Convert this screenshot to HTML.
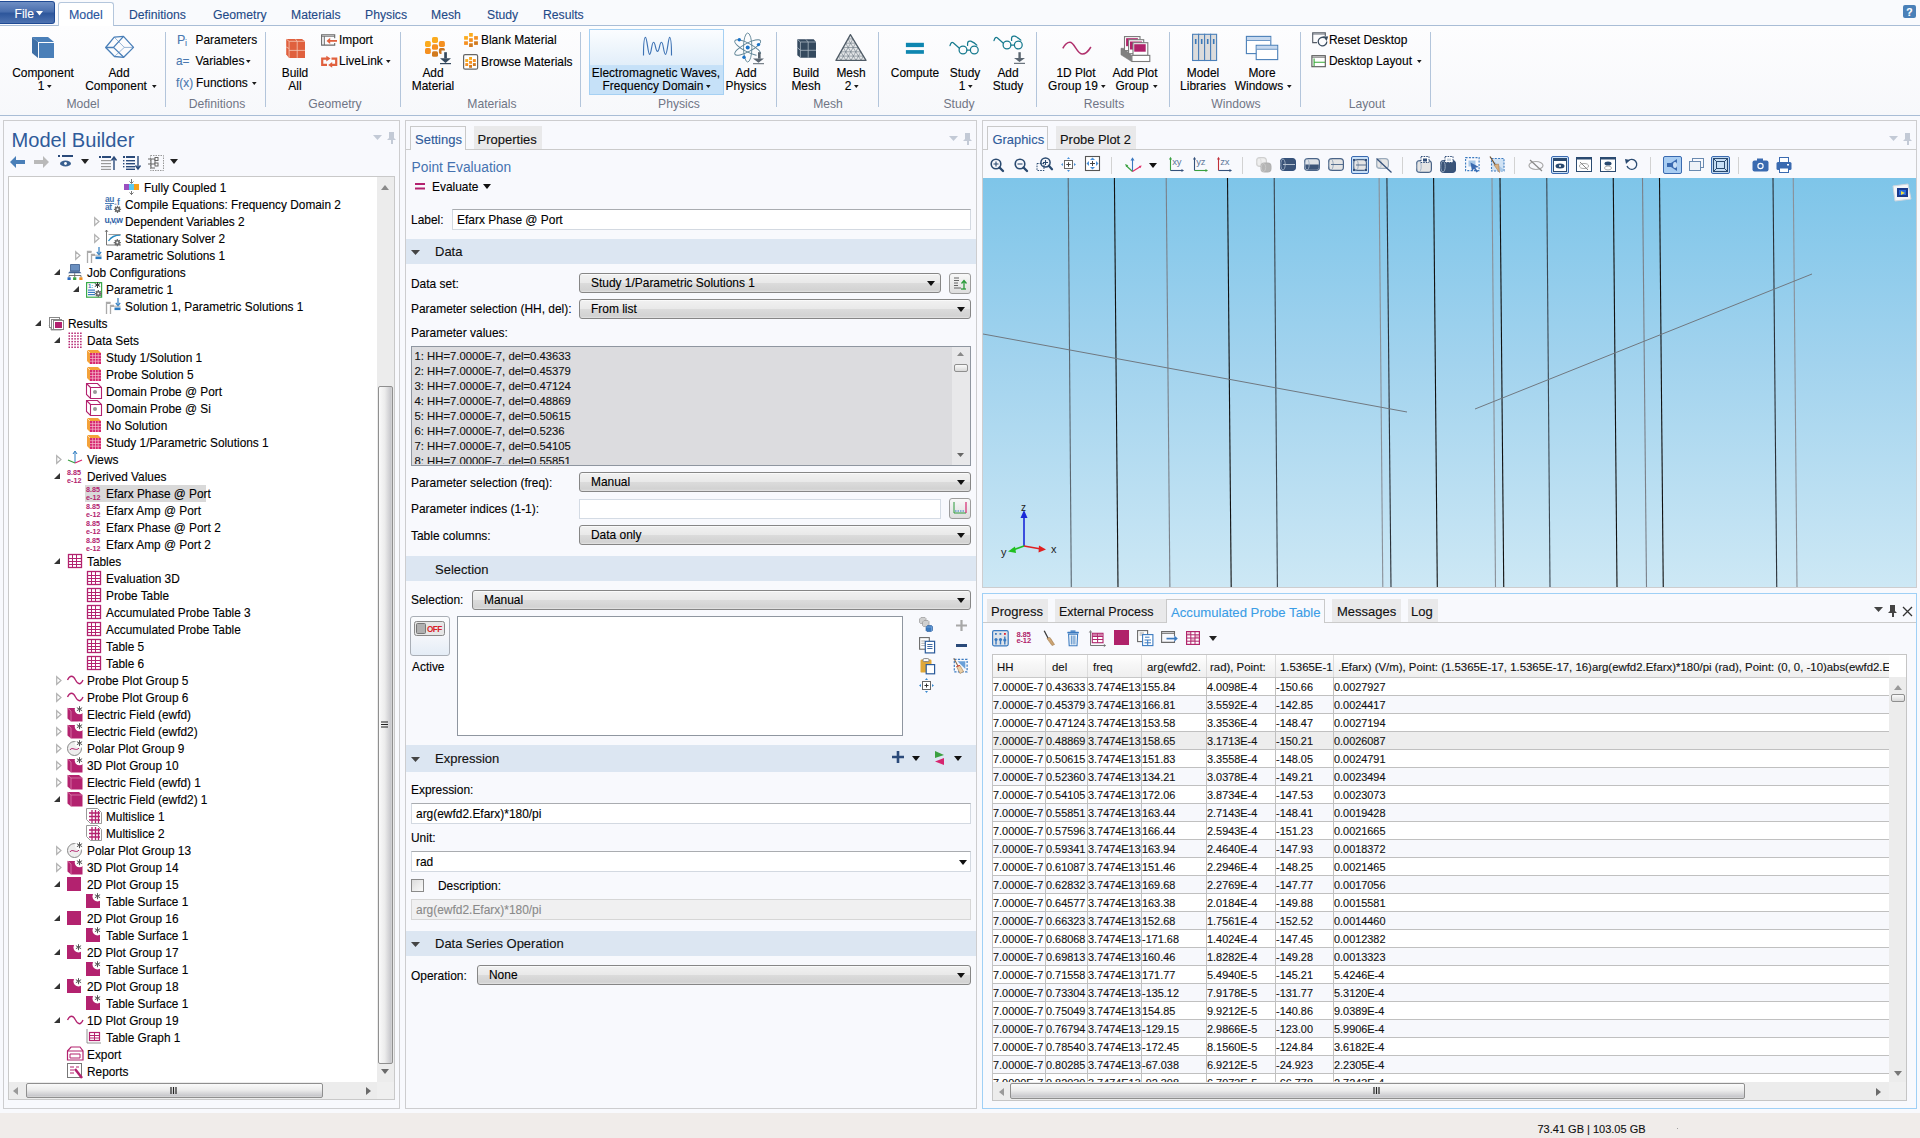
<!DOCTYPE html>
<html><head><meta charset="utf-8"><style>
html,body{margin:0;padding:0;}
body{width:1920px;height:1138px;position:relative;overflow:hidden;background:#f8f9fd;font-family:"Liberation Sans", sans-serif;}
.t{position:absolute;white-space:nowrap;line-height:1;font-family:"Liberation Sans", sans-serif;-webkit-text-stroke:0.12px currentColor;}
.lt{-webkit-text-stroke:0 !important;}
svg{overflow:visible}
</style></head><body>

<div style="position:absolute;left:0px;top:0px;width:1920px;height:26px;background:#f9fafd;"></div>
<div style="position:absolute;left:0px;top:25px;width:1920px;height:1px;background:#a9bdd6;"></div>
<div style="position:absolute;left:0px;top:26px;width:1920px;height:89px;background:linear-gradient(#fdfdfe,#f7f8fb);"></div>
<div style="position:absolute;left:0px;top:115px;width:1920px;height:1px;background:#a9bdd6;"></div>
<div style="position:absolute;left:0px;top:1px;width:55px;height:23px;background:linear-gradient(#6f8fc4 0%,#4a6fae 45%,#2e579c 55%,#4d72b0 100%);border:1px solid #1f4a94;border-left:none;border-radius:0 3px 3px 0;box-sizing:border-box;"></div>
<div class="t" style="left:14.5px;top:8.00px;font-size:12.15px;color:#fff;">File</div>
<svg style="position:absolute;left:36px;top:10.5px;" width="7" height="5" viewBox="0 0 7 5"><path d="M0 0H7L3.5 4.5Z" fill="#fff"/></svg>
<div style="position:absolute;left:58px;top:2px;width:56px;height:24px;background:#fff;border:1px solid #b4c6dc;border-bottom:none;border-radius:3px 3px 0 0;box-sizing:border-box;"></div>
<div class="t" style="left:69px;top:9.00px;font-size:12.4px;color:#2a56a0;">Model</div>
<div class="t" style="left:129px;top:9.00px;font-size:12.21px;color:#1f4a88;">Definitions</div>
<div class="t" style="left:213px;top:9.00px;font-size:12.21px;color:#1f4a88;">Geometry</div>
<div class="t" style="left:291px;top:9.00px;font-size:12.21px;color:#1f4a88;">Materials</div>
<div class="t" style="left:365px;top:9.00px;font-size:12.21px;color:#1f4a88;">Physics</div>
<div class="t" style="left:431px;top:9.00px;font-size:12.21px;color:#1f4a88;">Mesh</div>
<div class="t" style="left:487px;top:9.00px;font-size:12.21px;color:#1f4a88;">Study</div>
<div class="t" style="left:543px;top:9.00px;font-size:12.21px;color:#1f4a88;">Results</div>
<div style="position:absolute;left:1903px;top:5px;width:13px;height:13px;background:#4a80b8;border-radius:2px;"></div>
<div class="t" style="left:1906.3px;top:8.00px;font-size:10.4px;color:#fff;font-weight:bold;">?</div>
<div style="position:absolute;left:165px;top:32px;width:1px;height:75px;background:#b3c5db;"></div>
<div style="position:absolute;left:265px;top:32px;width:1px;height:75px;background:#b3c5db;"></div>
<div style="position:absolute;left:400px;top:32px;width:1px;height:75px;background:#b3c5db;"></div>
<div style="position:absolute;left:580px;top:32px;width:1px;height:75px;background:#b3c5db;"></div>
<div style="position:absolute;left:776px;top:32px;width:1px;height:75px;background:#b3c5db;"></div>
<div style="position:absolute;left:878px;top:32px;width:1px;height:75px;background:#b3c5db;"></div>
<div style="position:absolute;left:1036px;top:32px;width:1px;height:75px;background:#b3c5db;"></div>
<div style="position:absolute;left:1169px;top:32px;width:1px;height:75px;background:#b3c5db;"></div>
<div style="position:absolute;left:1300px;top:32px;width:1px;height:75px;background:#b3c5db;"></div>
<div style="position:absolute;left:1430px;top:32px;width:1px;height:75px;background:#b3c5db;"></div>
<div class="t" style="left:-67px;width:300px;text-align:center;top:98.00px;font-size:12.15px;color:#707585;-webkit-text-stroke:0;">Model</div>
<div class="t" style="left:67px;width:300px;text-align:center;top:98.00px;font-size:12.15px;color:#707585;-webkit-text-stroke:0;">Definitions</div>
<div class="t" style="left:185px;width:300px;text-align:center;top:98.00px;font-size:12.15px;color:#707585;-webkit-text-stroke:0;">Geometry</div>
<div class="t" style="left:342px;width:300px;text-align:center;top:98.00px;font-size:12.15px;color:#707585;-webkit-text-stroke:0;">Materials</div>
<div class="t" style="left:529px;width:300px;text-align:center;top:98.00px;font-size:12.15px;color:#707585;-webkit-text-stroke:0;">Physics</div>
<div class="t" style="left:678px;width:300px;text-align:center;top:98.00px;font-size:12.15px;color:#707585;-webkit-text-stroke:0;">Mesh</div>
<div class="t" style="left:809px;width:300px;text-align:center;top:98.00px;font-size:12.15px;color:#707585;-webkit-text-stroke:0;">Study</div>
<div class="t" style="left:954px;width:300px;text-align:center;top:98.00px;font-size:12.15px;color:#707585;-webkit-text-stroke:0;">Results</div>
<div class="t" style="left:1086px;width:300px;text-align:center;top:98.00px;font-size:12.15px;color:#707585;-webkit-text-stroke:0;">Windows</div>
<div class="t" style="left:1217px;width:300px;text-align:center;top:98.00px;font-size:12.15px;color:#707585;-webkit-text-stroke:0;">Layout</div>
<svg style="position:absolute;left:30px;top:36px;" width="26" height="24" viewBox="0 0 26 24"><path d="M2 1H18L24 6H8Z" fill="#4a7fb8"/><path d="M2 1L8 6V22L2 17Z" fill="#3f6fa6"/><rect x="9" y="7" width="15" height="15" fill="#4a7fb8"/></svg>
<div class="t" style="left:-107px;width:300px;text-align:center;top:68.00px;font-size:11.95px;color:#000;">Component</div>
<div class="t" style="left:-109px;width:300px;text-align:center;top:81.00px;font-size:11.95px;color:#000;">1</div>
<svg style="position:absolute;left:46.8px;top:85px;" width="5" height="4" viewBox="0 0 5 4"><path d="M0 0H4.6L2.3 3Z" fill="#1a1a1a"/></svg>
<svg style="position:absolute;left:100px;top:32px;" width="40" height="30" viewBox="0 0 40 30"><g fill="none" stroke="#4a7fb8" stroke-linejoin="round"><path d="M5.7 15.5L14.2 5.1L23.5 4.4L33.5 15.4L23.7 25.3L14.5 24.5Z" stroke-width="1.3"/><path d="M5.7 15.5H13.5M23.5 4.4L13.5 15.4L23.7 25.3" stroke-width="1.3"/><path d="M14.2 5.1L24.3 15.4L14.5 24.5M24.3 15.4H33.5" stroke-width="0.8" stroke-opacity="0.7"/></g></svg>
<div class="t" style="left:-31px;width:300px;text-align:center;top:68.00px;font-size:11.95px;color:#000;">Add</div>
<div class="t" style="left:-34px;width:300px;text-align:center;top:81.00px;font-size:11.95px;color:#000;">Component</div>
<svg style="position:absolute;left:151.6px;top:85px;" width="5" height="4" viewBox="0 0 5 4"><path d="M0 0H4.6L2.3 3Z" fill="#1a1a1a"/></svg>
<div class="t" style="left:177px;top:34.00px;font-size:12.5px;color:#4a78b0;">P</div>
<div class="t" style="left:185px;top:39.00px;font-size:9px;color:#4a78b0;">i</div>
<div class="t" style="left:195.5px;top:35.00px;font-size:11.95px;color:#000;">Parameters</div>
<div class="t" style="left:176px;top:56.00px;font-size:11.85px;color:#4a78b0;">a=</div>
<div class="t" style="left:195.5px;top:56.00px;font-size:11.95px;color:#000;">Variables</div>
<svg style="position:absolute;left:246.2px;top:60px;" width="5" height="4" viewBox="0 0 5 4"><path d="M0 0H4.6L2.3 3Z" fill="#1a1a1a"/></svg>
<div class="t" style="left:176px;top:78.00px;font-size:11.85px;color:#4a78b0;">f(x)</div>
<div class="t" style="left:196px;top:78.00px;font-size:11.95px;color:#000;">Functions</div>
<svg style="position:absolute;left:251.9px;top:82px;" width="5" height="4" viewBox="0 0 5 4"><path d="M0 0H4.6L2.3 3Z" fill="#1a1a1a"/></svg>
<svg style="position:absolute;left:280px;top:30px;" width="30" height="32" viewBox="0 0 30 32"><path d="M6.2 9.1H22L25 11.3V27.9H9.1L6.2 24.6Z" fill="#e0603e"/><path d="M9.1 11.3H25M9.1 20.4H25M17.2 11.3V27.9M9.1 11.3V27.9M6.2 9.1L9.1 11.3M6.2 17L9.1 18.5M15.5 9.1L17.2 11.3" stroke="#f5c8b8" stroke-width="0.8" fill="none"/></svg>
<div class="t" style="left:145px;width:300px;text-align:center;top:68.00px;font-size:11.95px;color:#000;">Build</div>
<div class="t" style="left:145px;width:300px;text-align:center;top:81.00px;font-size:11.95px;color:#000;">All</div>
<svg style="position:absolute;left:320px;top:30px;" width="20" height="20" viewBox="0 0 20 20"><path d="M14.7 8.3V4.7H1.6V15.1H14.7V13" fill="none" stroke="#6a6a6a" stroke-width="1.1"/><path d="M1.6 6.2H14.7M4.3 6.2V15.1" stroke="#6a6a6a" stroke-width="1"/><path d="M17 10.9H9" stroke="#e0603e" stroke-width="1.8"/><path d="M6.5 10.9L10.2 7.8V14Z" fill="#e0603e"/></svg>
<div class="t" style="left:339px;top:35.00px;font-size:11.95px;color:#000;">Import</div>
<svg style="position:absolute;left:320px;top:50px;" width="20" height="20" viewBox="0 0 20 20"><path d="M7 8.6H2.2V14.9H7M11.5 8.6H16.2V14.9H11" fill="none" stroke="#e0603e" stroke-width="2.2"/><path d="M6.3 5.8L10.6 8.6L6.3 11.4Z" fill="#e0603e"/><path d="M12.2 12.1L8.2 14.9L12.2 17.7Z" fill="#e0603e"/></svg>
<div class="t" style="left:339px;top:56.00px;font-size:11.95px;color:#000;">LiveLink</div>
<svg style="position:absolute;left:386.2px;top:60px;" width="5" height="4" viewBox="0 0 5 4"><path d="M0 0H4.6L2.3 3Z" fill="#1a1a1a"/></svg>
<svg style="position:absolute;left:420px;top:28px;" width="36" height="40" viewBox="0 0 36 40"><g><rect x="12" y="8.9" width="6" height="6" rx="1.6" fill="#fbab1e"/><rect x="5" y="13.1" width="5.8" height="5.8" rx="1.6" fill="#fbab1e"/><rect x="18.9" y="13.1" width="6" height="5.8" rx="1.6" fill="#f59020"/><rect x="12" y="16.2" width="6" height="5.6" rx="1.6" fill="#f59020"/><rect x="5" y="20.1" width="5.8" height="5.8" rx="1.6" fill="#f59020"/><rect x="12" y="23.2" width="6" height="5.6" rx="1.6" fill="#d27a1e"/><path d="M20.5 20.1H23.3Q24.9 20.1 24.9 21.7V22.5H21.5V25.9H20.5Q18.9 25.9 18.9 24.3V21.7Q18.9 20.1 20.5 20.1Z" fill="#c87420"/></g><rect x="24.2" y="24.2" width="2.7" height="6.2" fill="#34495e"/><path d="M20 30.2H31L25.5 35Z" fill="#34495e"/><rect x="20" y="35" width="11" height="1.2" fill="#34495e"/></svg>
<div class="t" style="left:283px;width:300px;text-align:center;top:68.00px;font-size:11.95px;color:#000;">Add</div>
<div class="t" style="left:283px;width:300px;text-align:center;top:81.00px;font-size:11.95px;color:#000;">Material</div>
<svg style="position:absolute;left:464px;top:33px;" width="16" height="16" viewBox="0 0 16 16"><g><rect x="5.1" y="0" width="3.7" height="3.7" fill="#fbab1e"/><rect x="0.1" y="3.1" width="3.8" height="3.6" fill="#fbab1e"/><rect x="10.1" y="3.1" width="3.8" height="3.6" fill="#f59020"/><rect x="5.1" y="5.2" width="3.7" height="3.7" fill="#f59020"/><rect x="0.1" y="8.3" width="3.8" height="3.6" fill="#f59020"/><rect x="10.1" y="8.3" width="3.8" height="3.6" fill="#d27a1e"/><rect x="5.1" y="10.3" width="3.7" height="3.7" fill="#d27a1e"/></g></svg>
<div class="t" style="left:481px;top:35.00px;font-size:11.95px;color:#000;">Blank Material</div>
<svg style="position:absolute;left:463px;top:54px;" width="16" height="17" viewBox="0 0 16 17"><rect x="0.6" y="0.6" width="14" height="14.6" rx="1.5" fill="#fff" stroke="#666" stroke-width="1.2"/><g><rect x="6.1" y="3" width="2.9" height="2.9" fill="#fbab1e"/><rect x="2.3" y="5.1" width="2.9" height="2.9" fill="#fbab1e"/><rect x="9.9" y="5.1" width="2.9" height="2.9" fill="#f59020"/><rect x="6.1" y="6.9" width="2.9" height="2.9" fill="#f59020"/><rect x="2.3" y="9.1" width="2.9" height="2.9" fill="#f59020"/><rect x="9.9" y="9.1" width="2.9" height="2.9" fill="#d27a1e"/><rect x="6.1" y="10.9" width="2.9" height="2.9" fill="#d27a1e"/></g></svg>
<div class="t" style="left:481px;top:57.00px;font-size:11.95px;color:#000;">Browse Materials</div>
<div style="position:absolute;left:589px;top:29px;width:135px;height:66px;border:1px solid #a5d0f3;box-sizing:border-box;background:linear-gradient(#fbfdff 0%,#e2eef9 55%,#c6e1f8 55.5%,#c6e1f8 100%);"></div>
<svg style="position:absolute;left:636px;top:32px;" width="44" height="30" viewBox="0 0 44 30"><path d="M7.5 23.5C7.5 8 8.5 5.3 9.5 5.3C11 5.3 12 22.4 13.6 22.4C15.5 22.4 15.5 10.3 17.5 10.3C19.5 10.3 19.5 19.3 21.5 19.3C23.5 19.3 23.5 10.3 25.5 10.3C27.5 10.3 27.5 22.4 29.6 22.4C31.2 22.4 32.5 5.3 33.5 5.3C34.5 5.3 35.5 8 35.5 23.5" fill="none" stroke="#3d72b4" stroke-width="1.15"/></svg>
<div class="t" style="left:506px;width:300px;text-align:center;top:68.00px;font-size:11.95px;color:#000;">Electromagnetic Waves,</div>
<div class="t" style="left:503px;width:300px;text-align:center;top:81.00px;font-size:11.95px;color:#000;">Frequency Domain</div>
<svg style="position:absolute;left:706.4px;top:85px;" width="5" height="4" viewBox="0 0 5 4"><path d="M0 0H4.6L2.3 3Z" fill="#1a1a1a"/></svg>
<svg style="position:absolute;left:730px;top:30px;" width="36" height="36" viewBox="0 0 36 36"><g fill="none" stroke="#5f8496" stroke-width="0.9"><ellipse cx="17.7" cy="17.5" rx="4.2" ry="14.5"/><ellipse cx="17.7" cy="17.5" rx="4.2" ry="14.5" transform="rotate(62 17.7 17.5)"/><ellipse cx="17.7" cy="17.5" rx="4.2" ry="14.5" transform="rotate(-62 17.7 17.5)"/></g><g fill="#1a73c8"><circle cx="17.7" cy="17.5" r="2"/><circle cx="9.3" cy="9.8" r="1.7"/><circle cx="28.5" cy="14.6" r="1.7"/><circle cx="14" cy="27.2" r="1.7"/></g><rect x="26.5" y="24" width="6" height="9" fill="#fbfcfe"/><rect x="28" y="22.2" width="2.6" height="6.4" fill="#5a6570"/><path d="M23 28.4H34L28.5 32.8Z" fill="#5a6570"/><rect x="23" y="33.2" width="11" height="1" fill="#5a6570"/></svg>
<div class="t" style="left:596px;width:300px;text-align:center;top:68.00px;font-size:11.95px;color:#000;">Add</div>
<div class="t" style="left:596px;width:300px;text-align:center;top:81.00px;font-size:11.95px;color:#000;">Physics</div>
<svg style="position:absolute;left:795px;top:37px;" width="24" height="24" viewBox="0 0 24 24"><path d="M2.3 2.3H18.7L21 5V20.7H5.4L2.3 18.3Z" fill="#34495e"/><path d="M5.4 5H21M5.4 13.3H21M13.2 5V20.7M5.4 5V20.7M2.3 2.3L5.4 5M10.8 2.3L13.2 5M2.3 10.5L5.4 13.3" stroke="#a9b6c2" stroke-width="0.8" fill="none"/></svg>
<div class="t" style="left:656px;width:300px;text-align:center;top:68.00px;font-size:11.95px;color:#000;">Build</div>
<div class="t" style="left:656px;width:300px;text-align:center;top:81.00px;font-size:11.95px;color:#000;">Mesh</div>
<svg style="position:absolute;left:835px;top:33px;" width="32" height="30" viewBox="0 0 32 30"><path d="M15.4 1.6L31.0 27.4H1.0Z" fill="#e4e6e8"/><path d="M13.00 5.90H18.00M18.00 5.90L6.00 27.40M13.00 5.90L26.00 27.40M10.60 10.20H20.60M20.60 10.20L11.00 27.40M10.60 10.20L21.00 27.40M8.20 14.50H23.20M23.20 14.50L16.00 27.40M8.20 14.50L16.00 27.40M5.80 18.80H25.80M25.80 18.80L21.00 27.40M5.80 18.80L11.00 27.40M3.40 23.10H28.40M28.40 23.10L26.00 27.40M3.40 23.10L6.00 27.40" stroke="#6f7a84" stroke-width="0.6" fill="none"/><path d="M15.4 1.6L31.0 27.4H1.0Z" fill="none" stroke="#4f5b66" stroke-width="1.3" stroke-linejoin="round"/></svg>
<div class="t" style="left:701px;width:300px;text-align:center;top:68.00px;font-size:11.95px;color:#000;">Mesh</div>
<div class="t" style="left:698px;width:300px;text-align:center;top:81.00px;font-size:11.95px;color:#000;">2</div>
<svg style="position:absolute;left:853.6px;top:85.2px;" width="5" height="4" viewBox="0 0 5 4"><path d="M0 0H4.6L2.3 3Z" fill="#1a1a1a"/></svg>
<svg style="position:absolute;left:905px;top:42px;" width="20" height="13" viewBox="0 0 20 13"><rect x="0.9" y="0.8" width="18" height="4.3" fill="#0e86b0"/><rect x="0.9" y="8.1" width="18" height="3.7" fill="#0e86b0"/></svg>
<div class="t" style="left:765px;width:300px;text-align:center;top:68.00px;font-size:11.95px;color:#000;">Compute</div>
<svg style="position:absolute;left:947.4px;top:35.9px;" width="34" height="22" viewBox="0 0 34 22"><g fill="none" stroke="#167a8e" stroke-width="1.25" stroke-linecap="round"><circle cx="16" cy="14" r="3.9"/><circle cx="27.3" cy="14" r="3.9"/><path d="M19.9 14H23.4M12.4 12.2L6.2 6.8Q4.2 5.2 3 9.6M20.6 9.4Q20 4.2 23.8 5.2Q27.5 6.6 29.8 9.2"/></g></svg>
<div class="t" style="left:815px;width:300px;text-align:center;top:68.00px;font-size:11.95px;color:#000;">Study</div>
<div class="t" style="left:812px;width:300px;text-align:center;top:81.00px;font-size:11.95px;color:#000;">1</div>
<svg style="position:absolute;left:968.2px;top:85.2px;" width="5" height="4" viewBox="0 0 5 4"><path d="M0 0H4.6L2.3 3Z" fill="#1a1a1a"/></svg>
<svg style="position:absolute;left:991.1px;top:30.799999999999997px;" width="34" height="22" viewBox="0 0 34 22"><g fill="none" stroke="#167a8e" stroke-width="1.25" stroke-linecap="round"><circle cx="16" cy="14" r="3.9"/><circle cx="27.3" cy="14" r="3.9"/><path d="M19.9 14H23.4M12.4 12.2L6.2 6.8Q4.2 5.2 3 9.6M20.6 9.4Q20 4.2 23.8 5.2Q27.5 6.6 29.8 9.2"/></g></svg>
<svg style="position:absolute;left:1012px;top:50px;" width="20" height="20" viewBox="0 0 20 20"><rect x="6.4" y="2.2" width="2.4" height="6" fill="#5a6570"/><path d="M2 8H13L7.6 12Z" fill="#5a6570"/><rect x="2" y="12.8" width="11" height="1.1" fill="#5a6570"/></svg>
<div class="t" style="left:858px;width:300px;text-align:center;top:68.00px;font-size:11.95px;color:#000;">Add</div>
<div class="t" style="left:858px;width:300px;text-align:center;top:81.00px;font-size:11.95px;color:#000;">Study</div>
<svg style="position:absolute;left:1055px;top:28px;" width="40" height="36" viewBox="0 0 40 36"><path d="M7.8 20.3C10 16 12.5 14.2 14.9 14.2C19.5 14.2 22 26.1 27.4 26.1C30.5 26.1 33.5 23 35.9 19" fill="none" stroke="#b0306c" stroke-width="1.5"/></svg>
<div class="t" style="left:926px;width:300px;text-align:center;top:68.00px;font-size:11.95px;color:#000;">1D Plot</div>
<div class="t" style="left:923px;width:300px;text-align:center;top:81.00px;font-size:11.95px;color:#000;">Group 19</div>
<svg style="position:absolute;left:1100.6px;top:85.2px;" width="5" height="4" viewBox="0 0 5 4"><path d="M0 0H4.6L2.3 3Z" fill="#1a1a1a"/></svg>
<svg style="position:absolute;left:1105px;top:28px;" width="50" height="40" viewBox="0 0 50 40"><path d="M16 20.3H18.5L26.5 27.4V33.5L16 26.8Z" fill="#808080" stroke="#777" stroke-width="0.6"/><rect x="19.5" y="8.6" width="15.5" height="14" fill="#fff" stroke="#7a7a7a" stroke-width="1.1"/><rect x="21.1" y="10.2" width="11.8" height="8" fill="#b0226a"/><rect x="23.6" y="11.7" width="15.1" height="14" fill="#fff" stroke="#7a7a7a" stroke-width="1.1"/><rect x="25" y="13.5" width="12" height="8" fill="#b0226a"/><rect x="28" y="14.7" width="14.8" height="12.7" fill="#fff" stroke="#7a7a7a" stroke-width="1.1"/><rect x="29.2" y="16.2" width="11.5" height="7.5" fill="#b0226a"/><rect x="26.9" y="27.4" width="17.9" height="6.1" fill="#fff" stroke="#7a7a7a" stroke-width="1.1"/></svg>
<div class="t" style="left:985px;width:300px;text-align:center;top:68.00px;font-size:11.95px;color:#000;">Add Plot</div>
<div class="t" style="left:982px;width:300px;text-align:center;top:81.00px;font-size:11.95px;color:#000;">Group</div>
<svg style="position:absolute;left:1152.8px;top:85.2px;" width="5" height="4" viewBox="0 0 5 4"><path d="M0 0H4.6L2.3 3Z" fill="#1a1a1a"/></svg>
<svg style="position:absolute;left:1190px;top:32px;" width="28" height="30" viewBox="0 0 28 30"><g fill="#dcdcdc" stroke="#4a7fb8" stroke-width="1.1"><rect x="2.6" y="2.3" width="6" height="26.2"/><rect x="8.6" y="2.3" width="6" height="26.2"/><rect x="14.6" y="2.3" width="6" height="26.2"/><rect x="20.6" y="2.3" width="6" height="26.2"/></g><g fill="#3a78b8"><rect x="4.9" y="7" width="1.6" height="5"/><rect x="10.9" y="7" width="1.6" height="5"/><rect x="16.9" y="7" width="1.6" height="5"/><rect x="22.9" y="7" width="1.6" height="5"/></g></svg>
<div class="t" style="left:1053px;width:300px;text-align:center;top:68.00px;font-size:11.95px;color:#000;">Model</div>
<div class="t" style="left:1053px;width:300px;text-align:center;top:81.00px;font-size:11.95px;color:#000;">Libraries</div>
<svg style="position:absolute;left:1245px;top:35px;" width="34" height="26" viewBox="0 0 34 26"><g fill="#fff" stroke="#4a7fb8" stroke-width="1.1"><rect x="1.4" y="1.4" width="24.4" height="17.2"/><rect x="11.2" y="10.3" width="21.5" height="14.3"/></g><rect x="2" y="2" width="23.2" height="3.2" fill="#c6d8ee"/><rect x="11.8" y="10.9" width="20.3" height="3.2" fill="#c6d8ee"/><path d="M2 5.5H25.2M11.8 14.3H32.1" stroke="#4a7fb8" stroke-width="0.8"/></svg>
<div class="t" style="left:1112px;width:300px;text-align:center;top:68.00px;font-size:11.95px;color:#000;">More</div>
<div class="t" style="left:1109px;width:300px;text-align:center;top:81.00px;font-size:11.95px;color:#000;">Windows</div>
<svg style="position:absolute;left:1286.5px;top:85.2px;" width="5" height="4" viewBox="0 0 5 4"><path d="M0 0H4.6L2.3 3Z" fill="#1a1a1a"/></svg>
<svg style="position:absolute;left:1310px;top:32px;" width="20" height="16" viewBox="0 0 20 16"><path d="M7 10.6H2.7V0.7H15.3V4" fill="none" stroke="#555c66" stroke-width="1.1"/><path d="M2.7 2H15.3" stroke="#555c66" stroke-width="0.9"/><path d="M16.8 9.5A4.3 4.3 0 1 1 14.6 5.8" fill="none" stroke="#3b4d60" stroke-width="1.3"/><path d="M13 4.2L18.2 4.4L16.6 9Z" fill="#3b4d60"/></svg>
<div class="t" style="left:1329px;top:35.00px;font-size:11.95px;color:#000;">Reset Desktop</div>
<svg style="position:absolute;left:1311px;top:55px;" width="16" height="13" viewBox="0 0 16 13"><rect x="0.9" y="0.7" width="13.4" height="11" fill="#fff" stroke="#555" stroke-width="1.1"/><path d="M0.9 2.2H14.3" stroke="#666" stroke-width="0.9"/><path d="M3.1 3.5V11.2M3.1 7.2H14" stroke="#3aaa3a" stroke-width="1.1"/></svg>
<div class="t" style="left:1329px;top:56.00px;font-size:11.95px;color:#000;">Desktop Layout</div>
<svg style="position:absolute;left:1416.8px;top:60px;" width="5" height="4" viewBox="0 0 5 4"><path d="M0 0H4.6L2.3 3Z" fill="#1a1a1a"/></svg>
<div style="position:absolute;left:0px;top:1113px;width:1920px;height:25px;background:#f0ecea;"></div>
<div class="t" style="left:1537.5px;top:1124.00px;font-size:11.0px;color:#111;">73.41 GB | 103.05 GB</div>
<div style="position:absolute;left:1677px;top:1128px;width:1px;height:1px;background:#a0a0a0;"></div>
<div style="position:absolute;left:3px;top:120px;width:397px;height:989px;border:1px solid #cdcdcf;box-sizing:border-box;background:#f8f9fd;"></div>
<div class="t" style="left:11.5px;top:130.00px;font-size:20.1px;color:#2f5b9a;-webkit-text-stroke:0;">Model Builder</div>
<svg style="position:absolute;left:373px;top:135px;" width="10" height="6" viewBox="0 0 10 6"><path d="M0 0H9L4.5 5Z" fill="#c3cad6"/></svg>
<svg style="position:absolute;left:387px;top:132px;" width="10" height="13" viewBox="0 0 10 13"><path d="M2 0H7V6L9 8H6V12H4V8H0L2 6Z" fill="#c3cad6"/></svg>
<svg style="position:absolute;left:10px;top:156px;" width="16" height="12" viewBox="0 0 16 12"><path d="M0 6L6 0V4H15V8H6V12Z" fill="#4a7fb8"/></svg>
<svg style="position:absolute;left:34px;top:156px;" width="16" height="12" viewBox="0 0 16 12"><path d="M15 6L9 0V4H0V8H9V12Z" fill="#b9b9b9"/></svg>
<svg style="position:absolute;left:58px;top:155px;" width="16" height="14" viewBox="0 0 16 14"><rect x="0" y="0" width="2" height="2" fill="#2a4a7a"/><rect x="4" y="0" width="11" height="2" fill="#2a4a7a"/><ellipse cx="7.5" cy="8.5" rx="5.5" ry="3" fill="#3a6090"/><circle cx="7.5" cy="8.5" r="1.4" fill="#fff"/></svg>
<svg style="position:absolute;left:81px;top:159px;" width="8" height="6" viewBox="0 0 8 6"><path d="M0 0H8L4 5Z" fill="#222"/></svg>
<svg style="position:absolute;left:99px;top:156px;" width="18" height="14" viewBox="0 0 18 14"><g fill="#999"><rect x="2" y="4" width="10" height="1.2"/><rect x="2" y="7" width="10" height="1.2"/><rect x="2" y="10" width="10" height="1.2"/><rect x="2" y="12.8" width="10" height="1.2"/></g><rect x="0" y="0" width="2" height="2" fill="#2a4a7a"/><rect x="3" y="0" width="9" height="2" fill="#2a4a7a"/><path d="M15 14V2M12.5 4.5L15 1L17.5 4.5" stroke="#2a4a7a" stroke-width="1.4" fill="none"/></svg>
<svg style="position:absolute;left:123px;top:156px;" width="18" height="14" viewBox="0 0 18 14"><g fill="#2a4a7a"><rect x="0" y="0" width="2" height="2"/><rect x="3" y="0" width="9" height="2"/><rect x="3" y="4" width="9" height="1.4"/><rect x="3" y="7" width="9" height="1.4"/><rect x="3" y="10" width="9" height="1.4"/><rect x="3" y="12.6" width="9" height="1.4"/><rect x="0" y="4" width="1.4" height="1.4"/><rect x="0" y="7" width="1.4" height="1.4"/><rect x="0" y="10" width="1.4" height="1.4"/></g><path d="M15 0V12M12.5 9.5L15 13L17.5 9.5" stroke="#2a4a7a" stroke-width="1.4" fill="none"/></svg>
<svg style="position:absolute;left:147px;top:155px;" width="18" height="16" viewBox="0 0 18 16"><rect x="3.5" y="0.5" width="13" height="15" fill="none" stroke="#999" stroke-dasharray="1.5 1"/><path d="M1 4H8V9H1M4 4V13H8" fill="none" stroke="#666"/><rect x="8" y="2.5" width="3" height="3" fill="#fff" stroke="#666"/><rect x="8" y="8" width="3" height="3" fill="#fff" stroke="#666"/></svg>
<svg style="position:absolute;left:170px;top:159px;" width="8" height="6" viewBox="0 0 8 6"><path d="M0 0H8L4 5Z" fill="#222"/></svg>
<div style="position:absolute;left:8px;top:176px;width:387px;height:924px;background:#fff;border:1px solid #c9c9c9;box-sizing:border-box;"></div>
<div style="position:absolute;left:377px;top:177px;width:17px;height:906px;background:#ececec;"></div>
<svg style="position:absolute;left:381px;top:185px;" width="8" height="5" viewBox="0 0 8 5"><path d="M0 5L4 0L8 5Z" fill="#8a8a8a"/></svg>
<svg style="position:absolute;left:381px;top:1069px;" width="8" height="5" viewBox="0 0 8 5"><path d="M0 0H8L4 5Z" fill="#6a6a6a"/></svg>
<div style="position:absolute;left:378px;top:386px;width:15px;height:678px;background:linear-gradient(90deg,#fafafa 0%,#ececec 45%,#c8c8cc 90%,#d8d8d8 100%);border:1px solid #8f8f8f;border-radius:2px;box-sizing:border-box;"></div>
<svg style="position:absolute;left:381px;top:721px;" width="8" height="7" viewBox="0 0 8 7"><g stroke="#222" stroke-width="1.2"><path d="M0 1H7M0 3.5H7M0 6H7"/></g></svg>
<div style="position:absolute;left:9px;top:1082px;width:368px;height:17px;background:#ececec;"></div>
<div style="position:absolute;left:377px;top:1082px;width:17px;height:17px;background:#efefef;"></div>
<svg style="position:absolute;left:13px;top:1087px;" width="5" height="8" viewBox="0 0 5 8"><path d="M5 0V8L0 4Z" fill="#9a9a9a"/></svg>
<svg style="position:absolute;left:366px;top:1087px;" width="5" height="8" viewBox="0 0 5 8"><path d="M0 0V8L5 4Z" fill="#6a6a6a"/></svg>
<div style="position:absolute;left:26px;top:1083px;width:297px;height:15px;background:linear-gradient(#fafafa 0%,#ececec 45%,#c8c8cc 90%,#d8d8d8 100%);border:1px solid #8f8f8f;border-radius:2px;box-sizing:border-box;"></div>
<svg style="position:absolute;left:170px;top:1087px;" width="7" height="8" viewBox="0 0 7 8"><g stroke="#222" stroke-width="1.2"><path d="M1 0V7M3.5 0V7M6 0V7"/></g></svg>
<svg style="position:absolute;left:124px;top:179px;" width="16" height="16" viewBox="0 0 16 16"><path d="M7.5 0V4M5.5 2.5L7.5 4.5L9.5 2.5M7.5 12V16M5.5 13.5L7.5 15.5L9.5 13.5" stroke="#777" stroke-width="1" fill="none"/><rect x="0" y="5" width="5" height="6" fill="#9b4fc0"/><rect x="5" y="5" width="5" height="6" fill="#5cc8ee"/><rect x="10" y="5" width="5" height="6" fill="#f7a21b"/></svg>
<div class="t" style="left:144px;top:183.00px;font-size:11.85px;color:#000;">Fully Coupled 1</div>
<svg style="position:absolute;left:105px;top:196px;" width="16" height="16" viewBox="0 0 16 16"><text x="0" y="6" font-size="8.4" fill="#3f72b0" font-family="Liberation Sans" font-weight="bold" letter-spacing="-0.3">au</text><rect x="0" y="7" width="9" height="0.9" fill="#3f72b0"/><text x="0" y="13.5" font-size="8.4" fill="#3f72b0" font-family="Liberation Sans" font-weight="bold" letter-spacing="-0.3">at</text><path d="M9.5 8.2H11.5" stroke="#3f72b0" stroke-width="0.8"/><text x="12" y="8.5" font-size="8.5" fill="#3f72b0" font-family="Liberation Sans" font-weight="bold">f</text><circle cx="12.5" cy="13.3" r="2.6" fill="#6a6a6a"/><g stroke="#6a6a6a" stroke-width="1.3"><path d="M12.5 9.700000000000001V16.900000000000002M8.9 13.3H16.1M10.0 10.8L15.0 15.8M10.0 15.8L15.0 10.8"/></g><circle cx="12.5" cy="13.3" r="1" fill="#fff"/></svg>
<div class="t" style="left:125px;top:200.00px;font-size:11.85px;color:#000;">Compile Equations: Frequency Domain 2</div>
<svg style="position:absolute;left:94px;top:216.5px;" width="6" height="9" viewBox="0 0 6 9"><path d="M0.7 0.7L5 4.5L0.7 8.3Z" fill="none" stroke="#b0b0b0" stroke-width="1.2"/></svg>
<svg style="position:absolute;left:105px;top:213px;" width="16" height="16" viewBox="0 0 16 16"><text x="-0.5" y="10" font-size="8.6" fill="#2f62a8" font-family="Liberation Sans" font-weight="bold" letter-spacing="-0.6">u,v,w</text></svg>
<div class="t" style="left:125px;top:217.00px;font-size:11.85px;color:#000;">Dependent Variables 2</div>
<svg style="position:absolute;left:94px;top:233.5px;" width="6" height="9" viewBox="0 0 6 9"><path d="M0.7 0.7L5 4.5L0.7 8.3Z" fill="none" stroke="#b0b0b0" stroke-width="1.2"/></svg>
<svg style="position:absolute;left:105px;top:230px;" width="16" height="16" viewBox="0 0 16 16"><path d="M1.5 0V15H16" stroke="#666" stroke-width="0.9" fill="none"/><path d="M0 2L1.5 0L3 2" stroke="#666" stroke-width="0.7" fill="none"/><path d="M3.5 11C6 7 9.5 5 15.5 5" stroke="#2a8ac0" stroke-width="1.3" fill="none"/><path d="M3.5 4.5H15.5" stroke="#888" stroke-width="0.8"/><circle cx="12.3" cy="12.6" r="2.6" fill="#6a6a6a"/><g stroke="#6a6a6a" stroke-width="1.3"><path d="M12.3 9.0V16.2M8.700000000000001 12.6H15.9M9.8 10.1L14.8 15.1M9.8 15.1L14.8 10.1"/></g><circle cx="12.3" cy="12.6" r="1" fill="#fff"/></svg>
<div class="t" style="left:125px;top:234.00px;font-size:11.85px;color:#000;">Stationary Solver 2</div>
<svg style="position:absolute;left:75px;top:250.5px;" width="6" height="9" viewBox="0 0 6 9"><path d="M0.7 0.7L5 4.5L0.7 8.3Z" fill="none" stroke="#b0b0b0" stroke-width="1.2"/></svg>
<svg style="position:absolute;left:86px;top:247px;" width="16" height="16" viewBox="0 0 16 16"><path d="M1.5 16V4.5H5.5M5.5 16V7.5H9" stroke="#aaa" stroke-width="1.3" fill="none"/><rect x="1" y="4" width="4.5" height="2" fill="#aaa"/><rect x="5" y="7" width="4" height="2" fill="#aaa"/><path d="M13 0V7" stroke="#2a7ac0" stroke-width="1.2"/><path d="M10.8 4.8L13 7.8L15.2 4.8" stroke="#2a7ac0" stroke-width="1.1" fill="none"/><rect x="9.5" y="9.5" width="6" height="2.6" fill="#2a7ac0"/><path d="M9 8.2H15.5" stroke="#999" stroke-width="0.8"/></svg>
<div class="t" style="left:106px;top:251.00px;font-size:11.85px;color:#000;">Parametric Solutions 1</div>
<svg style="position:absolute;left:54px;top:269px;" width="6" height="6" viewBox="0 0 6 6"><path d="M6 0V6H0Z" fill="#333"/></svg>
<svg style="position:absolute;left:67px;top:264px;" width="16" height="16" viewBox="0 0 16 16"><path d="M3.5 0.5H12.5V7H3.5Z" fill="#6a8fc0" stroke="#3a5a8a" stroke-width="0.8"/><path d="M1 9.2H14.5L12.5 7.2H3Z" fill="#3f6090"/><path d="M7.7 9.2V11.5M2 11.5H14M2 11.5V13.5M7.7 11.5V13.5M14 11.5V13.5" stroke="#555" stroke-width="0.8" fill="none"/><rect x="0.5" y="13.3" width="3.2" height="2.7" fill="#2a6ac0"/><rect x="6.1" y="13.3" width="3.2" height="2.7" fill="#3aa040"/><rect x="12.3" y="13.3" width="3.2" height="2.7" fill="#f09020"/></svg>
<div class="t" style="left:87px;top:268.00px;font-size:11.85px;color:#000;">Job Configurations</div>
<svg style="position:absolute;left:73px;top:286px;" width="6" height="6" viewBox="0 0 6 6"><path d="M6 0V6H0Z" fill="#333"/></svg>
<svg style="position:absolute;left:86px;top:281px;" width="16" height="16" viewBox="0 0 16 16"><rect x="0.6" y="1.6" width="15" height="14.6" fill="#fff" stroke="#3aaa4a" stroke-width="1.2"/><text x="2" y="7" font-size="6" fill="#3a7ac0" font-family="Liberation Sans" font-weight="bold">1:</text><g fill="#3a7ac0"><rect x="2" y="8.5" width="7" height="1.2"/><rect x="2" y="10.8" width="7" height="1.2"/><rect x="2" y="13" width="7" height="1.2"/></g><path d="M11.5 1V7M8.8 2.5L14.2 5.5M8.8 5.5L14.2 2.5" stroke="#333" stroke-width="1"/><circle cx="12.3" cy="12.6" r="2.6" fill="#6a6a6a"/><g stroke="#6a6a6a" stroke-width="1.3"><path d="M12.3 9.0V16.2M8.700000000000001 12.6H15.9M9.8 10.1L14.8 15.1M9.8 15.1L14.8 10.1"/></g><circle cx="12.3" cy="12.6" r="1" fill="#fff"/></svg>
<div class="t" style="left:106px;top:285.00px;font-size:11.85px;color:#000;">Parametric 1</div>
<svg style="position:absolute;left:105px;top:298px;" width="16" height="16" viewBox="0 0 16 16"><path d="M1.5 16V4.5H5.5M5.5 16V7.5H9" stroke="#aaa" stroke-width="1.3" fill="none"/><rect x="1" y="4" width="4.5" height="2" fill="#aaa"/><rect x="5" y="7" width="4" height="2" fill="#aaa"/><path d="M13 0V7" stroke="#2a7ac0" stroke-width="1.2"/><path d="M10.8 4.8L13 7.8L15.2 4.8" stroke="#2a7ac0" stroke-width="1.1" fill="none"/><rect x="9.5" y="9.5" width="6" height="2.6" fill="#2a7ac0"/><path d="M9 8.2H15.5" stroke="#999" stroke-width="0.8"/></svg>
<div class="t" style="left:125px;top:302.00px;font-size:11.85px;color:#000;">Solution 1, Parametric Solutions 1</div>
<svg style="position:absolute;left:35px;top:320px;" width="6" height="6" viewBox="0 0 6 6"><path d="M6 0V6H0Z" fill="#333"/></svg>
<svg style="position:absolute;left:48px;top:315px;" width="16" height="16" viewBox="0 0 16 16"><path d="M1 10.5L3 12.5V15H13.5V13.5" fill="#aaa" stroke="#888" stroke-width="0.8"/><rect x="1.5" y="2.5" width="10" height="10" fill="#fff" stroke="#888"/><rect x="3.5" y="4.5" width="10" height="10" fill="#fff" stroke="#888"/><rect x="5.5" y="5.5" width="10" height="9" fill="#fff" stroke="#888"/><rect x="7" y="7" width="7" height="6" fill="#b3226f"/></svg>
<div class="t" style="left:68px;top:319.00px;font-size:11.85px;color:#000;">Results</div>
<svg style="position:absolute;left:54px;top:337px;" width="6" height="6" viewBox="0 0 6 6"><path d="M6 0V6H0Z" fill="#333"/></svg>
<svg style="position:absolute;left:67px;top:332px;" width="16" height="16" viewBox="0 0 16 16"><rect x="1.5" y="0.5" width="1.5" height="1.5" fill="#b3226f"/><rect x="1.5" y="3.3" width="1.5" height="1.5" fill="#b3226f"/><rect x="1.5" y="6.1" width="1.5" height="1.5" fill="#b3226f"/><rect x="1.5" y="8.9" width="1.5" height="1.5" fill="#b3226f"/><rect x="1.5" y="11.7" width="1.5" height="1.5" fill="#b3226f"/><rect x="1.5" y="14.5" width="1.5" height="1.5" fill="#b3226f"/><rect x="4.4" y="0.5" width="1.5" height="1.5" fill="#b3226f"/><rect x="4.4" y="3.3" width="1.5" height="1.5" fill="#b3226f"/><rect x="4.4" y="6.1" width="1.5" height="1.5" fill="#b3226f"/><rect x="4.4" y="8.9" width="1.5" height="1.5" fill="#b3226f"/><rect x="4.4" y="11.7" width="1.5" height="1.5" fill="#b3226f"/><rect x="4.4" y="14.5" width="1.5" height="1.5" fill="#b3226f"/><rect x="7.3" y="0.5" width="1.5" height="1.5" fill="#b3226f"/><rect x="7.3" y="3.3" width="1.5" height="1.5" fill="#b3226f"/><rect x="7.3" y="6.1" width="1.5" height="1.5" fill="#b3226f"/><rect x="7.3" y="8.9" width="1.5" height="1.5" fill="#b3226f"/><rect x="7.3" y="11.7" width="1.5" height="1.5" fill="#b3226f"/><rect x="7.3" y="14.5" width="1.5" height="1.5" fill="#b3226f"/><rect x="10.2" y="0.5" width="1.5" height="1.5" fill="#b3226f"/><rect x="10.2" y="3.3" width="1.5" height="1.5" fill="#b3226f"/><rect x="10.2" y="6.1" width="1.5" height="1.5" fill="#b3226f"/><rect x="10.2" y="8.9" width="1.5" height="1.5" fill="#b3226f"/><rect x="10.2" y="11.7" width="1.5" height="1.5" fill="#b3226f"/><rect x="10.2" y="14.5" width="1.5" height="1.5" fill="#b3226f"/><rect x="13.1" y="0.5" width="1.5" height="1.5" fill="#b3226f"/><rect x="13.1" y="3.3" width="1.5" height="1.5" fill="#b3226f"/><rect x="13.1" y="6.1" width="1.5" height="1.5" fill="#b3226f"/><rect x="13.1" y="8.9" width="1.5" height="1.5" fill="#b3226f"/><rect x="13.1" y="11.7" width="1.5" height="1.5" fill="#b3226f"/><rect x="13.1" y="14.5" width="1.5" height="1.5" fill="#b3226f"/></svg>
<div class="t" style="left:87px;top:336.00px;font-size:11.85px;color:#000;">Data Sets</div>
<svg style="position:absolute;left:86px;top:349px;" width="16" height="16" viewBox="0 0 16 16"><path d="M1 1H12L15 4V15H4L1 12Z" fill="#f4a23a"/><rect x="4" y="4" width="11" height="11" fill="#d6256f"/><path d="M4 6.7H15M4 9.5H15M4 12.2H15M6.7 4V15M9.5 4V15M12.2 4V15" stroke="#f7c0d0" stroke-width="0.7"/><path d="M1 1L4 4" stroke="#fff" stroke-width="0.6"/></svg>
<div class="t" style="left:106px;top:353.00px;font-size:11.85px;color:#000;">Study 1/Solution 1</div>
<svg style="position:absolute;left:86px;top:366px;" width="16" height="16" viewBox="0 0 16 16"><path d="M1 1H12L15 4V15H4L1 12Z" fill="#f4a23a"/><rect x="4" y="4" width="11" height="11" fill="#d6256f"/><path d="M4 6.7H15M4 9.5H15M4 12.2H15M6.7 4V15M9.5 4V15M12.2 4V15" stroke="#f7c0d0" stroke-width="0.7"/><path d="M1 1L4 4" stroke="#fff" stroke-width="0.6"/></svg>
<div class="t" style="left:106px;top:370.00px;font-size:11.85px;color:#000;">Probe Solution 5</div>
<svg style="position:absolute;left:86px;top:383px;" width="16" height="16" viewBox="0 0 16 16"><path d="M0.5 0.5H11.5L15.5 4.5V15.5H4.5L0.5 11.5Z M4.5 4.5H15.5M4.5 4.5V15.5M0.5 0.5L4.5 4.5" fill="none" stroke="#b3226f" stroke-width="1.1"/><circle cx="9" cy="9" r="2" fill="#999"/></svg>
<div class="t" style="left:106px;top:387.00px;font-size:11.85px;color:#000;">Domain Probe @ Port</div>
<svg style="position:absolute;left:86px;top:400px;" width="16" height="16" viewBox="0 0 16 16"><path d="M0.5 0.5H11.5L15.5 4.5V15.5H4.5L0.5 11.5Z M4.5 4.5H15.5M4.5 4.5V15.5M0.5 0.5L4.5 4.5" fill="none" stroke="#b3226f" stroke-width="1.1"/><circle cx="9" cy="9" r="2" fill="#999"/></svg>
<div class="t" style="left:106px;top:404.00px;font-size:11.85px;color:#000;">Domain Probe @ Si</div>
<svg style="position:absolute;left:86px;top:417px;" width="16" height="16" viewBox="0 0 16 16"><path d="M1 1H12L15 4V15H4L1 12Z" fill="#f4a23a"/><rect x="4" y="4" width="11" height="11" fill="#d6256f"/><path d="M4 6.7H15M4 9.5H15M4 12.2H15M6.7 4V15M9.5 4V15M12.2 4V15" stroke="#f7c0d0" stroke-width="0.7"/><path d="M1 1L4 4" stroke="#fff" stroke-width="0.6"/></svg>
<div class="t" style="left:106px;top:421.00px;font-size:11.85px;color:#000;">No Solution</div>
<svg style="position:absolute;left:86px;top:434px;" width="16" height="16" viewBox="0 0 16 16"><path d="M1 1H12L15 4V15H4L1 12Z" fill="#f4a23a"/><rect x="4" y="4" width="11" height="11" fill="#d6256f"/><path d="M4 6.7H15M4 9.5H15M4 12.2H15M6.7 4V15M9.5 4V15M12.2 4V15" stroke="#f7c0d0" stroke-width="0.7"/><path d="M1 1L4 4" stroke="#fff" stroke-width="0.6"/></svg>
<div class="t" style="left:106px;top:438.00px;font-size:11.85px;color:#000;">Study 1/Parametric Solutions 1</div>
<svg style="position:absolute;left:56px;top:454.5px;" width="6" height="9" viewBox="0 0 6 9"><path d="M0.7 0.7L5 4.5L0.7 8.3Z" fill="none" stroke="#b0b0b0" stroke-width="1.2"/></svg>
<svg style="position:absolute;left:67px;top:451px;" width="16" height="16" viewBox="0 0 16 16"><path d="M8 12V1M6 3L8 0L10 3" stroke="#2a7ac0" stroke-width="1" fill="none"/><path d="M8 12L1 9" stroke="#3aa040" stroke-width="1.2"/><path d="M8 12L15 9" stroke="#d6256f" stroke-width="1.2"/></svg>
<div class="t" style="left:87px;top:455.00px;font-size:11.85px;color:#000;">Views</div>
<svg style="position:absolute;left:54px;top:473px;" width="6" height="6" viewBox="0 0 6 6"><path d="M6 0V6H0Z" fill="#333"/></svg>
<svg style="position:absolute;left:67px;top:468px;" width="16" height="16" viewBox="0 0 16 16"><text x="0" y="7" font-size="7.2" font-weight="bold" fill="#b3226f" font-family="Liberation Sans">8.85</text><text x="0" y="14.5" font-size="7.2" font-weight="bold" fill="#b3226f" font-family="Liberation Sans">e-12</text></svg>
<div class="t" style="left:87px;top:472.00px;font-size:11.85px;color:#000;">Derived Values</div>
<div style="position:absolute;left:85px;top:485px;width:121px;height:17px;background:#d9d9d9;"></div>
<svg style="position:absolute;left:86px;top:485px;" width="16" height="16" viewBox="0 0 16 16"><text x="0" y="7" font-size="7.2" font-weight="bold" fill="#b3226f" font-family="Liberation Sans">8.85</text><text x="0" y="14.5" font-size="7.2" font-weight="bold" fill="#b3226f" font-family="Liberation Sans">e-12</text></svg>
<div class="t" style="left:106px;top:489.00px;font-size:11.85px;color:#000;">Efarx Phase @ Port</div>
<svg style="position:absolute;left:86px;top:502px;" width="16" height="16" viewBox="0 0 16 16"><text x="0" y="7" font-size="7.2" font-weight="bold" fill="#b3226f" font-family="Liberation Sans">8.85</text><text x="0" y="14.5" font-size="7.2" font-weight="bold" fill="#b3226f" font-family="Liberation Sans">e-12</text></svg>
<div class="t" style="left:106px;top:506.00px;font-size:11.85px;color:#000;">Efarx Amp @ Port</div>
<svg style="position:absolute;left:86px;top:519px;" width="16" height="16" viewBox="0 0 16 16"><text x="0" y="7" font-size="7.2" font-weight="bold" fill="#b3226f" font-family="Liberation Sans">8.85</text><text x="0" y="14.5" font-size="7.2" font-weight="bold" fill="#b3226f" font-family="Liberation Sans">e-12</text></svg>
<div class="t" style="left:106px;top:523.00px;font-size:11.85px;color:#000;">Efarx Phase @ Port 2</div>
<svg style="position:absolute;left:86px;top:536px;" width="16" height="16" viewBox="0 0 16 16"><text x="0" y="7" font-size="7.2" font-weight="bold" fill="#b3226f" font-family="Liberation Sans">8.85</text><text x="0" y="14.5" font-size="7.2" font-weight="bold" fill="#b3226f" font-family="Liberation Sans">e-12</text></svg>
<div class="t" style="left:106px;top:540.00px;font-size:11.85px;color:#000;">Efarx Amp @ Port 2</div>
<svg style="position:absolute;left:54px;top:558px;" width="6" height="6" viewBox="0 0 6 6"><path d="M6 0V6H0Z" fill="#333"/></svg>
<svg style="position:absolute;left:67px;top:553px;" width="16" height="16" viewBox="0 0 16 16"><rect x="1.5" y="1.5" width="13" height="13" fill="none" stroke="#b3226f" stroke-width="1.3"/><path d="M1.5 5.5H14.5M1.5 8.5H14.5M1.5 11.5H14.5M5.5 1.5V14.5M9.5 1.5V14.5" stroke="#b3226f" stroke-width="1"/></svg>
<div class="t" style="left:87px;top:557.00px;font-size:11.85px;color:#000;">Tables</div>
<svg style="position:absolute;left:86px;top:570px;" width="16" height="16" viewBox="0 0 16 16"><rect x="1.5" y="1.5" width="13" height="13" fill="none" stroke="#b3226f" stroke-width="1.3"/><path d="M1.5 5.5H14.5M1.5 8.5H14.5M1.5 11.5H14.5M5.5 1.5V14.5M9.5 1.5V14.5" stroke="#b3226f" stroke-width="1"/></svg>
<div class="t" style="left:106px;top:574.00px;font-size:11.85px;color:#000;">Evaluation 3D</div>
<svg style="position:absolute;left:86px;top:587px;" width="16" height="16" viewBox="0 0 16 16"><rect x="1.5" y="1.5" width="13" height="13" fill="none" stroke="#b3226f" stroke-width="1.3"/><path d="M1.5 5.5H14.5M1.5 8.5H14.5M1.5 11.5H14.5M5.5 1.5V14.5M9.5 1.5V14.5" stroke="#b3226f" stroke-width="1"/></svg>
<div class="t" style="left:106px;top:591.00px;font-size:11.85px;color:#000;">Probe Table</div>
<svg style="position:absolute;left:86px;top:604px;" width="16" height="16" viewBox="0 0 16 16"><rect x="1.5" y="1.5" width="13" height="13" fill="none" stroke="#b3226f" stroke-width="1.3"/><path d="M1.5 5.5H14.5M1.5 8.5H14.5M1.5 11.5H14.5M5.5 1.5V14.5M9.5 1.5V14.5" stroke="#b3226f" stroke-width="1"/></svg>
<div class="t" style="left:106px;top:608.00px;font-size:11.85px;color:#000;">Accumulated Probe Table 3</div>
<svg style="position:absolute;left:86px;top:621px;" width="16" height="16" viewBox="0 0 16 16"><rect x="1.5" y="1.5" width="13" height="13" fill="none" stroke="#b3226f" stroke-width="1.3"/><path d="M1.5 5.5H14.5M1.5 8.5H14.5M1.5 11.5H14.5M5.5 1.5V14.5M9.5 1.5V14.5" stroke="#b3226f" stroke-width="1"/></svg>
<div class="t" style="left:106px;top:625.00px;font-size:11.85px;color:#000;">Accumulated Probe Table</div>
<svg style="position:absolute;left:86px;top:638px;" width="16" height="16" viewBox="0 0 16 16"><rect x="1.5" y="1.5" width="13" height="13" fill="none" stroke="#b3226f" stroke-width="1.3"/><path d="M1.5 5.5H14.5M1.5 8.5H14.5M1.5 11.5H14.5M5.5 1.5V14.5M9.5 1.5V14.5" stroke="#b3226f" stroke-width="1"/></svg>
<div class="t" style="left:106px;top:642.00px;font-size:11.85px;color:#000;">Table 5</div>
<svg style="position:absolute;left:86px;top:655px;" width="16" height="16" viewBox="0 0 16 16"><rect x="1.5" y="1.5" width="13" height="13" fill="none" stroke="#b3226f" stroke-width="1.3"/><path d="M1.5 5.5H14.5M1.5 8.5H14.5M1.5 11.5H14.5M5.5 1.5V14.5M9.5 1.5V14.5" stroke="#b3226f" stroke-width="1"/></svg>
<div class="t" style="left:106px;top:659.00px;font-size:11.85px;color:#000;">Table 6</div>
<svg style="position:absolute;left:56px;top:675.5px;" width="6" height="9" viewBox="0 0 6 9"><path d="M0.7 0.7L5 4.5L0.7 8.3Z" fill="none" stroke="#b0b0b0" stroke-width="1.2"/></svg>
<svg style="position:absolute;left:67px;top:672px;" width="16" height="16" viewBox="0 0 16 16"><path d="M0.5 8C3 3 6 3 8.5 8C11 13 14 13 16 8" fill="none" stroke="#b3226f" stroke-width="1.3"/></svg>
<div class="t" style="left:87px;top:676.00px;font-size:11.85px;color:#000;">Probe Plot Group 5</div>
<svg style="position:absolute;left:56px;top:692.5px;" width="6" height="9" viewBox="0 0 6 9"><path d="M0.7 0.7L5 4.5L0.7 8.3Z" fill="none" stroke="#b0b0b0" stroke-width="1.2"/></svg>
<svg style="position:absolute;left:67px;top:689px;" width="16" height="16" viewBox="0 0 16 16"><path d="M0.5 8C3 3 6 3 8.5 8C11 13 14 13 16 8" fill="none" stroke="#b3226f" stroke-width="1.3"/></svg>
<div class="t" style="left:87px;top:693.00px;font-size:11.85px;color:#000;">Probe Plot Group 6</div>
<svg style="position:absolute;left:56px;top:709.5px;" width="6" height="9" viewBox="0 0 6 9"><path d="M0.7 0.7L5 4.5L0.7 8.3Z" fill="none" stroke="#b0b0b0" stroke-width="1.2"/></svg>
<svg style="position:absolute;left:67px;top:706px;" width="16" height="16" viewBox="0 0 16 16"><path d="M0.5 2H11L15.5 5V15.5H4L0.5 12.5Z" fill="#b3226f"/><path d="M0.5 2L4 5V15.5" stroke="#e7a0c0" stroke-width="0.6" fill="none"/><circle cx="12.5" cy="3.5" r="4.8" fill="#fff"/><path d="M12.5 0.20000000000000018V6.2M9.89 1.70L15.11 4.70M9.89 4.70L15.11 1.70" stroke="#555" stroke-width="1"/></svg>
<div class="t" style="left:87px;top:710.00px;font-size:11.85px;color:#000;">Electric Field (ewfd)</div>
<svg style="position:absolute;left:56px;top:726.5px;" width="6" height="9" viewBox="0 0 6 9"><path d="M0.7 0.7L5 4.5L0.7 8.3Z" fill="none" stroke="#b0b0b0" stroke-width="1.2"/></svg>
<svg style="position:absolute;left:67px;top:723px;" width="16" height="16" viewBox="0 0 16 16"><path d="M0.5 2H11L15.5 5V15.5H4L0.5 12.5Z" fill="#b3226f"/><path d="M0.5 2L4 5V15.5" stroke="#e7a0c0" stroke-width="0.6" fill="none"/><circle cx="12.5" cy="3.5" r="4.8" fill="#fff"/><path d="M12.5 0.20000000000000018V6.2M9.89 1.70L15.11 4.70M9.89 4.70L15.11 1.70" stroke="#555" stroke-width="1"/></svg>
<div class="t" style="left:87px;top:727.00px;font-size:11.85px;color:#000;">Electric Field (ewfd2)</div>
<svg style="position:absolute;left:56px;top:743.5px;" width="6" height="9" viewBox="0 0 6 9"><path d="M0.7 0.7L5 4.5L0.7 8.3Z" fill="none" stroke="#b0b0b0" stroke-width="1.2"/></svg>
<svg style="position:absolute;left:67px;top:740px;" width="16" height="16" viewBox="0 0 16 16"><circle cx="7.5" cy="8.5" r="7" fill="#eee" stroke="#888"/><path d="M3 10C5 6 9 12 12 8" stroke="#b3226f" stroke-width="1" fill="none"/><circle cx="12.5" cy="3.5" r="4.5" fill="#fff"/><path d="M12.5 0.20000000000000018V6.2M9.89 1.70L15.11 4.70M9.89 4.70L15.11 1.70" stroke="#555" stroke-width="1"/></svg>
<div class="t" style="left:87px;top:744.00px;font-size:11.85px;color:#000;">Polar Plot Group 9</div>
<svg style="position:absolute;left:56px;top:760.5px;" width="6" height="9" viewBox="0 0 6 9"><path d="M0.7 0.7L5 4.5L0.7 8.3Z" fill="none" stroke="#b0b0b0" stroke-width="1.2"/></svg>
<svg style="position:absolute;left:67px;top:757px;" width="16" height="16" viewBox="0 0 16 16"><path d="M0.5 2H11L15.5 5V15.5H4L0.5 12.5Z" fill="#b3226f"/><path d="M0.5 2L4 5V15.5" stroke="#e7a0c0" stroke-width="0.6" fill="none"/><circle cx="12.5" cy="3.5" r="4.8" fill="#fff"/><path d="M12.5 0.20000000000000018V6.2M9.89 1.70L15.11 4.70M9.89 4.70L15.11 1.70" stroke="#555" stroke-width="1"/></svg>
<div class="t" style="left:87px;top:761.00px;font-size:11.85px;color:#000;">3D Plot Group 10</div>
<svg style="position:absolute;left:56px;top:777.5px;" width="6" height="9" viewBox="0 0 6 9"><path d="M0.7 0.7L5 4.5L0.7 8.3Z" fill="none" stroke="#b0b0b0" stroke-width="1.2"/></svg>
<svg style="position:absolute;left:67px;top:774px;" width="16" height="16" viewBox="0 0 16 16"><path d="M0.5 1H12L15.5 4V15.5H4L0.5 12.5Z" fill="#b3226f"/><path d="M0.5 1L4 4H15.5M4 4V15.5" stroke="#e7a0c0" stroke-width="0.6" fill="none"/></svg>
<div class="t" style="left:87px;top:778.00px;font-size:11.85px;color:#000;">Electric Field (ewfd) 1</div>
<svg style="position:absolute;left:54px;top:796px;" width="6" height="6" viewBox="0 0 6 6"><path d="M6 0V6H0Z" fill="#333"/></svg>
<svg style="position:absolute;left:67px;top:791px;" width="16" height="16" viewBox="0 0 16 16"><path d="M0.5 1H12L15.5 4V15.5H4L0.5 12.5Z" fill="#b3226f"/><path d="M0.5 1L4 4H15.5M4 4V15.5" stroke="#e7a0c0" stroke-width="0.6" fill="none"/></svg>
<div class="t" style="left:87px;top:795.00px;font-size:11.85px;color:#000;">Electric Field (ewfd2) 1</div>
<svg style="position:absolute;left:86px;top:808px;" width="16" height="16" viewBox="0 0 16 16"><path d="M0.5 0.5H11.5L15.5 4.5V15.5H4.5L0.5 11.5Z" fill="none" stroke="#999"/><path d="M3 5H14M3 8.5H14M3 12H14M6 2V15M9.5 2V15M12.5 3V15" stroke="#b3226f" stroke-width="1.3"/></svg>
<div class="t" style="left:106px;top:812.00px;font-size:11.85px;color:#000;">Multislice 1</div>
<svg style="position:absolute;left:86px;top:825px;" width="16" height="16" viewBox="0 0 16 16"><path d="M0.5 0.5H11.5L15.5 4.5V15.5H4.5L0.5 11.5Z" fill="none" stroke="#999"/><path d="M3 5H14M3 8.5H14M3 12H14M6 2V15M9.5 2V15M12.5 3V15" stroke="#b3226f" stroke-width="1.3"/></svg>
<div class="t" style="left:106px;top:829.00px;font-size:11.85px;color:#000;">Multislice 2</div>
<svg style="position:absolute;left:56px;top:845.5px;" width="6" height="9" viewBox="0 0 6 9"><path d="M0.7 0.7L5 4.5L0.7 8.3Z" fill="none" stroke="#b0b0b0" stroke-width="1.2"/></svg>
<svg style="position:absolute;left:67px;top:842px;" width="16" height="16" viewBox="0 0 16 16"><circle cx="7.5" cy="8.5" r="7" fill="#eee" stroke="#888"/><path d="M3 10C5 6 9 12 12 8" stroke="#b3226f" stroke-width="1" fill="none"/><circle cx="12.5" cy="3.5" r="4.5" fill="#fff"/><path d="M12.5 0.20000000000000018V6.2M9.89 1.70L15.11 4.70M9.89 4.70L15.11 1.70" stroke="#555" stroke-width="1"/></svg>
<div class="t" style="left:87px;top:846.00px;font-size:11.85px;color:#000;">Polar Plot Group 13</div>
<svg style="position:absolute;left:56px;top:862.5px;" width="6" height="9" viewBox="0 0 6 9"><path d="M0.7 0.7L5 4.5L0.7 8.3Z" fill="none" stroke="#b0b0b0" stroke-width="1.2"/></svg>
<svg style="position:absolute;left:67px;top:859px;" width="16" height="16" viewBox="0 0 16 16"><path d="M0.5 2H11L15.5 5V15.5H4L0.5 12.5Z" fill="#b3226f"/><path d="M0.5 2L4 5V15.5" stroke="#e7a0c0" stroke-width="0.6" fill="none"/><circle cx="12.5" cy="3.5" r="4.8" fill="#fff"/><path d="M12.5 0.20000000000000018V6.2M9.89 1.70L15.11 4.70M9.89 4.70L15.11 1.70" stroke="#555" stroke-width="1"/></svg>
<div class="t" style="left:87px;top:863.00px;font-size:11.85px;color:#000;">3D Plot Group 14</div>
<svg style="position:absolute;left:54px;top:881px;" width="6" height="6" viewBox="0 0 6 6"><path d="M6 0V6H0Z" fill="#333"/></svg>
<svg style="position:absolute;left:67px;top:876px;" width="16" height="16" viewBox="0 0 16 16"><rect x="0" y="1" width="14" height="14" fill="#b3226f"/></svg>
<div class="t" style="left:87px;top:880.00px;font-size:11.85px;color:#000;">2D Plot Group 15</div>
<svg style="position:absolute;left:86px;top:893px;" width="16" height="16" viewBox="0 0 16 16"><rect x="0" y="1" width="14" height="14" fill="#b3226f"/><circle cx="11.5" cy="3.5" r="5" fill="#fff"/><path d="M11.5 0.20000000000000018V6.2M8.89 1.70L14.11 4.70M8.89 4.70L14.11 1.70" stroke="#555" stroke-width="1"/></svg>
<div class="t" style="left:106px;top:897.00px;font-size:11.85px;color:#000;">Table Surface 1</div>
<svg style="position:absolute;left:54px;top:915px;" width="6" height="6" viewBox="0 0 6 6"><path d="M6 0V6H0Z" fill="#333"/></svg>
<svg style="position:absolute;left:67px;top:910px;" width="16" height="16" viewBox="0 0 16 16"><rect x="0" y="1" width="14" height="14" fill="#b3226f"/></svg>
<div class="t" style="left:87px;top:914.00px;font-size:11.85px;color:#000;">2D Plot Group 16</div>
<svg style="position:absolute;left:86px;top:927px;" width="16" height="16" viewBox="0 0 16 16"><rect x="0" y="1" width="14" height="14" fill="#b3226f"/><circle cx="11.5" cy="3.5" r="5" fill="#fff"/><path d="M11.5 0.20000000000000018V6.2M8.89 1.70L14.11 4.70M8.89 4.70L14.11 1.70" stroke="#555" stroke-width="1"/></svg>
<div class="t" style="left:106px;top:931.00px;font-size:11.85px;color:#000;">Table Surface 1</div>
<svg style="position:absolute;left:54px;top:949px;" width="6" height="6" viewBox="0 0 6 6"><path d="M6 0V6H0Z" fill="#333"/></svg>
<svg style="position:absolute;left:67px;top:944px;" width="16" height="16" viewBox="0 0 16 16"><rect x="0" y="1" width="14" height="14" fill="#b3226f"/><circle cx="11.5" cy="3.5" r="5" fill="#fff"/><path d="M11.5 0.20000000000000018V6.2M8.89 1.70L14.11 4.70M8.89 4.70L14.11 1.70" stroke="#555" stroke-width="1"/></svg>
<div class="t" style="left:87px;top:948.00px;font-size:11.85px;color:#000;">2D Plot Group 17</div>
<svg style="position:absolute;left:86px;top:961px;" width="16" height="16" viewBox="0 0 16 16"><rect x="0" y="1" width="14" height="14" fill="#b3226f"/><circle cx="11.5" cy="3.5" r="5" fill="#fff"/><path d="M11.5 0.20000000000000018V6.2M8.89 1.70L14.11 4.70M8.89 4.70L14.11 1.70" stroke="#555" stroke-width="1"/></svg>
<div class="t" style="left:106px;top:965.00px;font-size:11.85px;color:#000;">Table Surface 1</div>
<svg style="position:absolute;left:54px;top:983px;" width="6" height="6" viewBox="0 0 6 6"><path d="M6 0V6H0Z" fill="#333"/></svg>
<svg style="position:absolute;left:67px;top:978px;" width="16" height="16" viewBox="0 0 16 16"><rect x="0" y="1" width="14" height="14" fill="#b3226f"/><circle cx="11.5" cy="3.5" r="5" fill="#fff"/><path d="M11.5 0.20000000000000018V6.2M8.89 1.70L14.11 4.70M8.89 4.70L14.11 1.70" stroke="#555" stroke-width="1"/></svg>
<div class="t" style="left:87px;top:982.00px;font-size:11.85px;color:#000;">2D Plot Group 18</div>
<svg style="position:absolute;left:86px;top:995px;" width="16" height="16" viewBox="0 0 16 16"><rect x="0" y="1" width="14" height="14" fill="#b3226f"/><circle cx="11.5" cy="3.5" r="5" fill="#fff"/><path d="M11.5 0.20000000000000018V6.2M8.89 1.70L14.11 4.70M8.89 4.70L14.11 1.70" stroke="#555" stroke-width="1"/></svg>
<div class="t" style="left:106px;top:999.00px;font-size:11.85px;color:#000;">Table Surface 1</div>
<svg style="position:absolute;left:54px;top:1017px;" width="6" height="6" viewBox="0 0 6 6"><path d="M6 0V6H0Z" fill="#333"/></svg>
<svg style="position:absolute;left:67px;top:1012px;" width="16" height="16" viewBox="0 0 16 16"><path d="M0.5 8C3 3 6 3 8.5 8C11 13 14 13 16 8" fill="none" stroke="#b3226f" stroke-width="1.3"/></svg>
<div class="t" style="left:87px;top:1016.00px;font-size:11.85px;color:#000;">1D Plot Group 19</div>
<svg style="position:absolute;left:86px;top:1029px;" width="16" height="16" viewBox="0 0 16 16"><path d="M1 0V14H15" stroke="#777" stroke-width="0.8" fill="none"/><rect x="3.5" y="3.5" width="10" height="8" fill="none" stroke="#b3226f" stroke-width="1.2"/><path d="M3.5 6.5H13.5M3.5 9H13.5M8.5 3.5V11.5" stroke="#b3226f" stroke-width="1"/></svg>
<div class="t" style="left:106px;top:1033.00px;font-size:11.85px;color:#000;">Table Graph 1</div>
<svg style="position:absolute;left:67px;top:1046px;" width="16" height="16" viewBox="0 0 16 16"><path d="M0.5 5L4 1H13L16 5V14H0.5Z" fill="#fff" stroke="#b3226f" stroke-width="1.2"/><path d="M0.5 5H16M3 8H13V12H3Z" fill="none" stroke="#b3226f" stroke-width="1"/></svg>
<div class="t" style="left:87px;top:1050.00px;font-size:11.85px;color:#000;">Export</div>
<svg style="position:absolute;left:67px;top:1063px;" width="16" height="16" viewBox="0 0 16 16"><rect x="0.5" y="0.5" width="14" height="14" fill="#fff" stroke="#777"/><path d="M3 4H7M3 7H7M3 10H7M9 4H12" stroke="#b3226f" stroke-width="1"/><path d="M8 6L15 15" stroke="#b3226f" stroke-width="2.5"/></svg>
<div class="t" style="left:87px;top:1067.00px;font-size:11.85px;color:#000;">Reports</div>
<div style="position:absolute;left:405px;top:120px;width:572px;height:989px;border:1px solid #cdcdcf;box-sizing:border-box;background:#f8f9fd;"></div>
<div style="position:absolute;left:406px;top:149px;width:570px;height:1px;background:#cbcbcb;"></div>
<div style="position:absolute;left:410px;top:126px;width:56px;height:24px;background:#f8f9fd;border:1px solid #c9c9c9;border-bottom:none;box-sizing:border-box;"></div>
<div class="t" style="left:415px;top:133.00px;font-size:13.0px;color:#2f5b9a;">Settings</div>
<div style="position:absolute;left:474px;top:126px;width:68px;height:23px;background:#e9e9ea;"></div>
<div class="t" style="left:477.5px;top:133.00px;font-size:13.0px;color:#111;">Properties</div>
<svg style="position:absolute;left:949px;top:136px;" width="10" height="6" viewBox="0 0 10 6"><path d="M0 0H9L4.5 5Z" fill="#c3cad6"/></svg>
<svg style="position:absolute;left:963px;top:133px;" width="10" height="13" viewBox="0 0 10 13"><path d="M2 0H7V6L9 8H6V12H4V8H0L2 6Z" fill="#c3cad6"/></svg>
<div class="t" style="left:411.5px;top:161.00px;font-size:13.8px;color:#4572b0;-webkit-text-stroke:0;">Point Evaluation</div>
<svg style="position:absolute;left:415px;top:183px;" width="11" height="7" viewBox="0 0 11 7"><rect x="0" y="0" width="10" height="2" fill="#b3226f"/><rect x="0" y="4.5" width="10" height="2" fill="#b3226f"/></svg>
<div class="t" style="left:432px;top:182.00px;font-size:11.95px;color:#000;">Evaluate</div>
<svg style="position:absolute;left:483px;top:184px;" width="8" height="5" viewBox="0 0 8 5"><path d="M0 0H8L4 5Z" fill="#111"/></svg>
<div class="t" style="left:411px;top:215.00px;font-size:11.95px;color:#000;">Label:</div>
<div style="position:absolute;left:452px;top:209px;width:519px;height:21px;background:#fff;border:1px solid #d3d9e1;border-top-color:#a9acb0;box-sizing:border-box;"></div>
<div class="t" style="left:457px;top:215.00px;font-size:11.95px;color:#000;">Efarx Phase @ Port</div>
<div style="position:absolute;left:406px;top:239px;width:570px;height:25px;background:#dce6f2;"></div>
<svg style="position:absolute;left:411px;top:249.5px;" width="9" height="5" viewBox="0 0 9 5"><path d="M0 0H9L4.5 5Z" fill="#444"/></svg>
<div class="t" style="left:435px;top:245.00px;font-size:13.0px;color:#111;">Data</div>
<div class="t" style="left:411px;top:279.00px;font-size:11.95px;color:#000;">Data set:</div>
<div style="position:absolute;left:579px;top:273px;width:362px;height:20px;background:linear-gradient(#ffffff 0%,#f0f0f0 8%,#e9e9e9 48%,#dbdbdb 52%,#d2d2d2 90%,#e4e4e4 100%);border:1px solid #868686;border-radius:3px;box-sizing:border-box;"></div>
<div class="t" style="left:591px;top:278.00px;font-size:11.95px;color:#000;">Study 1/Parametric Solutions 1</div>
<svg style="position:absolute;left:927px;top:281px;" width="8" height="5" viewBox="0 0 8 5"><path d="M0 0H8L4 5Z" fill="#111"/></svg>
<div style="position:absolute;left:949px;top:273px;width:22px;height:21px;background:linear-gradient(#f8f8f8,#dedede);border:1px solid #9c9c9c;border-radius:3px;box-sizing:border-box;"></div>
<svg style="position:absolute;left:953px;top:277px;" width="14" height="13" viewBox="0 0 14 13"><g stroke="#555" stroke-width="0.9"><path d="M1 1H6M1 3.5H6M1 6H5M1 8.5H5M1 11H8"/></g><path d="M11 12V4M8.5 6.5L11 3.5L13.5 6.5" stroke="#2a9a3a" stroke-width="1.3" fill="none"/><path d="M8 12H13" stroke="#2a9a3a" stroke-width="1.3"/></svg>
<div class="t" style="left:411px;top:304.00px;font-size:11.95px;color:#000;">Parameter selection (HH, del):</div>
<div style="position:absolute;left:579px;top:299px;width:392px;height:20px;background:linear-gradient(#ffffff 0%,#f0f0f0 8%,#e9e9e9 48%,#dbdbdb 52%,#d2d2d2 90%,#e4e4e4 100%);border:1px solid #868686;border-radius:3px;box-sizing:border-box;"></div>
<div class="t" style="left:591px;top:304.00px;font-size:11.95px;color:#000;">From list</div>
<svg style="position:absolute;left:957px;top:307px;" width="8" height="5" viewBox="0 0 8 5"><path d="M0 0H8L4 5Z" fill="#111"/></svg>
<div class="t" style="left:411px;top:328.00px;font-size:11.95px;color:#000;">Parameter values:</div>
<div style="position:absolute;left:411px;top:346px;width:560px;height:120px;background:#dcdcdf;border:1px solid #8f96a0;box-sizing:border-box;"></div>
<div style="position:absolute;left:952px;top:347px;width:18px;height:118px;background:#e8e8ea;"></div>
<svg style="position:absolute;left:957px;top:352px;" width="7" height="4" viewBox="0 0 7 4"><path d="M0 4L3.5 0L7 4Z" fill="#888"/></svg>
<svg style="position:absolute;left:957px;top:453px;" width="7" height="4" viewBox="0 0 7 4"><path d="M0 0H7L3.5 4Z" fill="#666"/></svg>
<div style="position:absolute;left:954px;top:364px;width:14px;height:8px;background:linear-gradient(#fafafa,#d8d8d8);border:1px solid #8f8f8f;border-radius:2px;box-sizing:border-box;"></div>
<div style="position:absolute;left:412px;top:347px;width:540px;height:117px;overflow:hidden;">
<div class="t" style="left:2.5px;top:4.00px;font-size:11.3px;color:#111;">1: HH=7.0000E-7, del=0.43633</div>
<div class="t" style="left:2.5px;top:19.00px;font-size:11.3px;color:#111;">2: HH=7.0000E-7, del=0.45379</div>
<div class="t" style="left:2.5px;top:34.00px;font-size:11.3px;color:#111;">3: HH=7.0000E-7, del=0.47124</div>
<div class="t" style="left:2.5px;top:49.00px;font-size:11.3px;color:#111;">4: HH=7.0000E-7, del=0.48869</div>
<div class="t" style="left:2.5px;top:64.00px;font-size:11.3px;color:#111;">5: HH=7.0000E-7, del=0.50615</div>
<div class="t" style="left:2.5px;top:79.00px;font-size:11.3px;color:#111;">6: HH=7.0000E-7, del=0.5236</div>
<div class="t" style="left:2.5px;top:94.00px;font-size:11.3px;color:#111;">7: HH=7.0000E-7, del=0.54105</div>
<div class="t" style="left:2.5px;top:109.00px;font-size:11.3px;color:#111;">8: HH=7.0000E-7, del=0.55851</div>
</div>
<div class="t" style="left:411px;top:478.00px;font-size:11.95px;color:#000;">Parameter selection (freq):</div>
<div style="position:absolute;left:579px;top:472px;width:392px;height:20px;background:linear-gradient(#ffffff 0%,#f0f0f0 8%,#e9e9e9 48%,#dbdbdb 52%,#d2d2d2 90%,#e4e4e4 100%);border:1px solid #868686;border-radius:3px;box-sizing:border-box;"></div>
<div class="t" style="left:591px;top:477.00px;font-size:11.95px;color:#000;">Manual</div>
<svg style="position:absolute;left:957px;top:480px;" width="8" height="5" viewBox="0 0 8 5"><path d="M0 0H8L4 5Z" fill="#111"/></svg>
<div class="t" style="left:411px;top:504.00px;font-size:11.95px;color:#000;">Parameter indices (1-1):</div>
<div style="position:absolute;left:579px;top:499px;width:362px;height:20px;background:#fff;border:1px solid #d4dbe4;border-top-color:#d4dbe4;box-sizing:border-box;"></div>
<div style="position:absolute;left:949px;top:498px;width:22px;height:21px;background:linear-gradient(#f8f8f8,#dedede);border:1px solid #9c9c9c;border-radius:3px;box-sizing:border-box;"></div>
<svg style="position:absolute;left:953px;top:502px;" width="14" height="12" viewBox="0 0 14 12"><path d="M1 0V11H13" stroke="#2a9a3a" stroke-width="1" fill="none"/><path d="M13 0V11" stroke="#d6256f" stroke-width="1.2"/><path d="M2 9H12" stroke="#2a7ac0" stroke-width="1" stroke-dasharray="1.5 1"/></svg>
<div class="t" style="left:411px;top:531.00px;font-size:11.95px;color:#000;">Table columns:</div>
<div style="position:absolute;left:579px;top:525px;width:392px;height:20px;background:linear-gradient(#ffffff 0%,#f0f0f0 8%,#e9e9e9 48%,#dbdbdb 52%,#d2d2d2 90%,#e4e4e4 100%);border:1px solid #868686;border-radius:3px;box-sizing:border-box;"></div>
<div class="t" style="left:591px;top:530.00px;font-size:11.95px;color:#000;">Data only</div>
<svg style="position:absolute;left:957px;top:533px;" width="8" height="5" viewBox="0 0 8 5"><path d="M0 0H8L4 5Z" fill="#111"/></svg>
<div style="position:absolute;left:406px;top:556px;width:570px;height:25px;background:#dce6f2;"></div>
<div class="t" style="left:435px;top:563.00px;font-size:13.0px;color:#111;">Selection</div>
<div class="t" style="left:411px;top:595.00px;font-size:11.95px;color:#000;">Selection:</div>
<div style="position:absolute;left:472px;top:590px;width:499px;height:20px;background:linear-gradient(#ffffff 0%,#f0f0f0 8%,#e9e9e9 48%,#dbdbdb 52%,#d2d2d2 90%,#e4e4e4 100%);border:1px solid #868686;border-radius:3px;box-sizing:border-box;"></div>
<div class="t" style="left:484px;top:595.00px;font-size:11.95px;color:#000;">Manual</div>
<svg style="position:absolute;left:957px;top:598px;" width="8" height="5" viewBox="0 0 8 5"><path d="M0 0H8L4 5Z" fill="#111"/></svg>
<div style="position:absolute;left:410px;top:616px;width:40px;height:40px;background:linear-gradient(#fbfcfe 0%,#f4f6fa 50%,#e4ecf6 100%);border:1px solid #a9aeb6;border-radius:3px;box-sizing:border-box;"></div>
<svg style="position:absolute;left:414px;top:621px;" width="31" height="16" viewBox="0 0 31 16"><rect x="0.5" y="0.5" width="30" height="14" rx="2" fill="#e6e6e6" stroke="#888"/><rect x="2.5" y="2.5" width="9" height="10" rx="1" fill="#b0b0b0" stroke="#777"/><text x="13" y="11" font-size="8.2" font-weight="bold" fill="#d8202a" font-family="Liberation Sans" letter-spacing="-0.5">OFF</text></svg>
<div class="t" style="left:412px;top:662.00px;font-size:11.95px;color:#000;">Active</div>
<div style="position:absolute;left:457px;top:616px;width:446px;height:120px;background:#fff;border:1px solid #8f96a0;box-sizing:border-box;"></div>
<svg style="position:absolute;left:919px;top:617px;" width="15" height="15" viewBox="0 0 15 15"><g fill="#d0d0d0" stroke="#9a9a9a" stroke-width="0.7"><path d="M0.5 2L2 0.5H6L7 1.5V5.5L5.5 6.5H1.5L0.5 5.5Z"/><path d="M3.5 5L5 3.5H9L10 4.5V8.5L8.5 9.5H4.5L3.5 8.5Z"/></g><path d="M7 10L8.5 8.5H12.5L13.5 9.5V13.5L12 14.5H8L7 13.5Z" fill="#3a7ac0" stroke="#2a5a9a" stroke-width="0.6"/><path d="M7 10H12.5V14.5M12.5 10L13.5 9" stroke="#8ab4e0" stroke-width="0.6" fill="none"/></svg>
<svg style="position:absolute;left:956px;top:620px;" width="11" height="11" viewBox="0 0 11 11"><path d="M5.5 0V11M0 5.5H11" stroke="#a8a8a8" stroke-width="2.2"/></svg>
<svg style="position:absolute;left:919px;top:637px;" width="17" height="17" viewBox="0 0 17 17"><rect x="0.6" y="0.6" width="9.7" height="11.6" fill="#fff" stroke="#6a6a6a" stroke-width="1.1"/><path d="M2.3 4H6M2.3 6.3H6M2.3 8.6H6" stroke="#999" stroke-width="0.8"/><rect x="6.3" y="4.3" width="9.3" height="11.6" fill="#fff" stroke="#2a5a9a" stroke-width="1.2"/><path d="M8.3 7.5H13.5M8.3 9.5H13.5M8.3 11.5H13.5" stroke="#2a5a9a" stroke-width="0.9"/></svg>
<svg style="position:absolute;left:956px;top:644px;" width="11" height="3" viewBox="0 0 11 3"><rect x="0" y="0" width="11" height="3" fill="#2a4a7a"/></svg>
<svg style="position:absolute;left:920px;top:658px;" width="16" height="17" viewBox="0 0 16 17"><rect x="0.5" y="1.6" width="11" height="13" rx="1.2" fill="#e0a838"/><rect x="3" y="0.6" width="6" height="3" rx="1.2" fill="#fff" stroke="#777" stroke-width="0.9"/><rect x="6.2" y="6.6" width="8.4" height="9.2" fill="#fff" stroke="#2a5a9a" stroke-width="1.2"/></svg>
<svg style="position:absolute;left:953px;top:658px;" width="16" height="16" viewBox="0 0 16 16"><rect x="1.3" y="1.3" width="12.8" height="12.6" fill="none" stroke="#3a7ac0" stroke-width="1.2" stroke-dasharray="2.2 1.4"/><path d="M4.5 3.3H12.3V11Z" fill="#6aa0d8"/><path d="M0.8 0.3L5.5 9" stroke="#8a6a4a" stroke-width="1.1"/><path d="M3.5 8.5L7 7.5L10.5 13.5L7 15.5Z" fill="#ecd0a8" stroke="#a07848" stroke-width="0.6"/><path d="M3.6 8.5L6.8 7.4" stroke="#d03030" stroke-width="1"/></svg>
<svg style="position:absolute;left:919px;top:678px;" width="15" height="15" viewBox="0 0 15 15"><rect x="3.5" y="3.5" width="8" height="8" fill="#fff" stroke="#666"/><path d="M7.5 5.5V9.5M5.5 7.5H9.5" stroke="#333"/><g fill="#3a8ad0"><path d="M7.5 0L9 2H6Z"/><path d="M7.5 15L9 13H6Z"/><path d="M0 7.5L2 6V9Z"/><path d="M15 7.5L13 6V9Z"/></g></svg>
<div style="position:absolute;left:406px;top:745px;width:570px;height:27px;background:#dce6f2;"></div>
<svg style="position:absolute;left:411px;top:756.5px;" width="9" height="5" viewBox="0 0 9 5"><path d="M0 0H9L4.5 5Z" fill="#444"/></svg>
<div class="t" style="left:435px;top:752.00px;font-size:13.0px;color:#111;">Expression</div>
<svg style="position:absolute;left:892px;top:751px;" width="12" height="12" viewBox="0 0 12 12"><path d="M6 0V12M0 6H12" stroke="#2a4a7a" stroke-width="2.6"/></svg>
<svg style="position:absolute;left:912px;top:756px;" width="8" height="5" viewBox="0 0 8 5"><path d="M0 0H8L4 5Z" fill="#111"/></svg>
<svg style="position:absolute;left:934px;top:751px;" width="11" height="14" viewBox="0 0 11 14"><path d="M1 0L10 4L1 7Z" fill="#3aa040"/><path d="M10 7L1 10.5L10 14Z" fill="#d6256f"/></svg>
<svg style="position:absolute;left:954px;top:756px;" width="8" height="5" viewBox="0 0 8 5"><path d="M0 0H8L4 5Z" fill="#111"/></svg>
<div class="t" style="left:411px;top:785.00px;font-size:11.95px;color:#000;">Expression:</div>
<div style="position:absolute;left:411px;top:803px;width:560px;height:21px;background:#fff;border:1px solid #d3d9e1;border-top-color:#a9acb0;box-sizing:border-box;"></div>
<div class="t" style="left:416px;top:809.00px;font-size:11.95px;color:#000;">arg(ewfd2.Efarx)*180/pi</div>
<div class="t" style="left:411px;top:833.00px;font-size:11.95px;color:#000;">Unit:</div>
<div style="position:absolute;left:411px;top:851px;width:560px;height:21px;background:#fff;border:1px solid #d3d9e1;border-top-color:#a9acb0;box-sizing:border-box;"></div>
<div class="t" style="left:416px;top:857.00px;font-size:11.95px;color:#000;">rad</div>
<svg style="position:absolute;left:958.5px;top:859.5px;" width="8" height="5" viewBox="0 0 8 5"><path d="M0 0H8L4 5Z" fill="#111"/></svg>
<div style="position:absolute;left:411px;top:879px;width:13px;height:13px;background:linear-gradient(135deg,#dcdcdc,#fafafa);border:1px solid #8a8a8a;box-sizing:border-box;"></div>
<div class="t" style="left:438px;top:881.00px;font-size:11.95px;color:#000;">Description:</div>
<div style="position:absolute;left:411px;top:899px;width:560px;height:21px;background:#f0f0f1;border:1px solid #d6d6d6;border-top-color:#d6d6d6;box-sizing:border-box;"></div>
<div class="t" style="left:416px;top:905.00px;font-size:11.95px;color:#8a8a8a;">arg(ewfd2.Efarx)*180/pi</div>
<div style="position:absolute;left:406px;top:931px;width:570px;height:25px;background:#dce6f2;"></div>
<svg style="position:absolute;left:411px;top:941.5px;" width="9" height="5" viewBox="0 0 9 5"><path d="M0 0H9L4.5 5Z" fill="#444"/></svg>
<div class="t" style="left:435px;top:937.00px;font-size:13.0px;color:#111;">Data Series Operation</div>
<div class="t" style="left:411px;top:971.00px;font-size:11.95px;color:#000;">Operation:</div>
<div style="position:absolute;left:477px;top:965px;width:494px;height:20px;background:linear-gradient(#ffffff 0%,#f0f0f0 8%,#e9e9e9 48%,#dbdbdb 52%,#d2d2d2 90%,#e4e4e4 100%);border:1px solid #868686;border-radius:3px;box-sizing:border-box;"></div>
<div class="t" style="left:489px;top:970.00px;font-size:11.95px;color:#000;">None</div>
<svg style="position:absolute;left:957px;top:973px;" width="8" height="5" viewBox="0 0 8 5"><path d="M0 0H8L4 5Z" fill="#111"/></svg>
<div style="position:absolute;left:982px;top:120px;width:935px;height:468px;border:1px solid #cdcdcf;box-sizing:border-box;background:#f8f9fd;"></div>
<div style="position:absolute;left:983px;top:149px;width:933px;height:1px;background:#cbcbcb;"></div>
<div style="position:absolute;left:987px;top:126px;width:61px;height:24px;background:#f8f9fd;border:1px solid #c9c9c9;border-bottom:none;box-sizing:border-box;"></div>
<div class="t" style="left:992.5px;top:134.00px;font-size:12.9px;color:#2f5b9a;">Graphics</div>
<div style="position:absolute;left:1056px;top:126px;width:80px;height:23px;background:#e9e9ea;"></div>
<div class="t" style="left:1060px;top:134.00px;font-size:12.9px;color:#111;">Probe Plot 2</div>
<svg style="position:absolute;left:1889px;top:136px;" width="10" height="6" viewBox="0 0 10 6"><path d="M0 0H9L4.5 5Z" fill="#c3cad6"/></svg>
<svg style="position:absolute;left:1903px;top:133px;" width="10" height="13" viewBox="0 0 10 13"><path d="M2 0H7V6L9 8H6V12H4V8H0L2 6Z" fill="#c3cad6"/></svg>
<svg style="position:absolute;left:989.5px;top:158px;" width="14" height="14" viewBox="0 0 14 14"><circle cx="6" cy="6" r="4.8" fill="none" stroke="#2a4a70" stroke-width="1.6"/><path d="M9.5 9.5L13 13" stroke="#2a4a70" stroke-width="2.4" stroke-linecap="round"/><path d="M6 3.5V8.5M3.5 6H8.5" stroke="#2a4a70" stroke-width="1.1"/></svg>
<svg style="position:absolute;left:1013.5px;top:158px;" width="14" height="14" viewBox="0 0 14 14"><circle cx="6" cy="6" r="4.8" fill="none" stroke="#2a4a70" stroke-width="1.6"/><path d="M9.5 9.5L13 13" stroke="#2a4a70" stroke-width="2.4" stroke-linecap="round"/><path d="M3.5 6H8.5" stroke="#2a4a70" stroke-width="1.1"/></svg>
<svg style="position:absolute;left:1036px;top:157px;" width="18" height="15" viewBox="0 0 18 15"><rect x="1" y="6.5" width="7" height="7" fill="none" stroke="#2a4a70" stroke-dasharray="1.6 1.1"/><circle cx="9.5" cy="5.5" r="4.6" fill="none" stroke="#2a4a70" stroke-width="1.5"/><path d="M9.5 3V8M7 5.5H12" stroke="#2a4a70" stroke-width="1.1"/><path d="M12.8 8.8L16 12.2" stroke="#2a4a70" stroke-width="2.3" stroke-linecap="round"/></svg>
<svg style="position:absolute;left:1061px;top:157px;" width="16" height="16" viewBox="0 0 16 16"><rect x="3.5" y="3.5" width="8" height="8" fill="#fff" stroke="#666"/><path d="M7.5 5.3V9.7M5.3 7.5H9.7" stroke="#444"/><g fill="#4a90d8"><path d="M7.5 0L9 2H6Z"/><path d="M7.5 15L9 13H6Z"/><path d="M0 7.5L2 6V9Z"/><path d="M15 7.5L13 6V9Z"/></g></svg>
<svg style="position:absolute;left:1085px;top:156px;" width="16" height="16" viewBox="0 0 16 16"><rect x="0.5" y="0.5" width="14" height="14" fill="#fff" stroke="#555" stroke-width="1.1"/><path d="M7.5 5V10M5 7.5H10" stroke="#444"/><g fill="#4a90d8"><path d="M7.5 1.5L10 4H5Z"/><path d="M7.5 13.5L10 11H5Z"/><path d="M1.5 7.5L4 5V10Z"/><path d="M13.5 7.5L11 5V10Z"/></g></svg>
<div style="position:absolute;left:1111px;top:157px;width:1px;height:17px;background:#d2d2d2;"></div>
<div style="position:absolute;left:1242px;top:157px;width:1px;height:17px;background:#d2d2d2;"></div>
<div style="position:absolute;left:1402px;top:157px;width:1px;height:17px;background:#d2d2d2;"></div>
<div style="position:absolute;left:1514px;top:157px;width:1px;height:17px;background:#d2d2d2;"></div>
<div style="position:absolute;left:1650px;top:157px;width:1px;height:17px;background:#d2d2d2;"></div>
<div style="position:absolute;left:1738px;top:157px;width:1px;height:17px;background:#d2d2d2;"></div>
<svg style="position:absolute;left:1124px;top:156px;" width="20" height="18" viewBox="0 0 20 18"><path d="M8.5 15.5V2.5" stroke="#3a78c0" stroke-width="1.1"/><path d="M6.5 4.5L8.5 1.2L10.5 4.5Z" fill="#3a78c0"/><path d="M8.5 15.5L2 9.5" stroke="#3aa040" stroke-width="1.2"/><path d="M1 8L4.3 9.2L2.4 11Z" fill="#3aa040"/><path d="M8.5 15.5L16.5 10.5" stroke="#e0306a" stroke-width="1.2"/><path d="M17.8 9.5L14.8 10L16.2 12.3Z" fill="#e0306a"/></svg>
<svg style="position:absolute;left:1149px;top:163px;" width="8" height="5" viewBox="0 0 8 5"><path d="M0 0H8L4 5Z" fill="#111"/></svg>
<svg style="position:absolute;left:1169px;top:156px;" width="18" height="17" viewBox="0 0 18 17"><path d="M1.5 2V14.5" stroke="#3aa040" stroke-width="1.1"/><path d="M0 3.5L1.5 0.8L3 3.5Z" fill="#3aa040"/><path d="M1.5 14.5H13.5" stroke="#34507a" stroke-width="1.1"/><path d="M12.5 13L15 14.5L12.5 16Z" fill="#34507a"/><text x="3.2" y="9.2" font-size="9.5" fill="#60789a" font-family="Liberation Sans" letter-spacing="-0.3">xy</text></svg>
<svg style="position:absolute;left:1193px;top:156px;" width="18" height="17" viewBox="0 0 18 17"><path d="M1.5 2V14.5" stroke="#34507a" stroke-width="1.1"/><path d="M0 3.5L1.5 0.8L3 3.5Z" fill="#34507a"/><path d="M1.5 14.5H13.5" stroke="#3aa040" stroke-width="1.1"/><path d="M12.5 13L15 14.5L12.5 16Z" fill="#3aa040"/><text x="3.2" y="9.2" font-size="9.5" fill="#60789a" font-family="Liberation Sans" letter-spacing="-0.3">yz</text></svg>
<svg style="position:absolute;left:1217px;top:156px;" width="18" height="17" viewBox="0 0 18 17"><path d="M1.5 2V14.5" stroke="#c0303a" stroke-width="1.1"/><path d="M0 3.5L1.5 0.8L3 3.5Z" fill="#c0303a"/><path d="M1.5 14.5H13.5" stroke="#34507a" stroke-width="1.1"/><path d="M12.5 13L15 14.5L12.5 16Z" fill="#34507a"/><text x="3.2" y="9.2" font-size="9.5" fill="#60789a" font-family="Liberation Sans" letter-spacing="-0.3">zx</text></svg>
<svg style="position:absolute;left:1256px;top:157px;" width="17" height="16" viewBox="0 0 17 16"><g transform="translate(0,0)"><rect x="0.6" y="0.6" width="9.8" height="8.8" rx="3.2" fill="#eeeeee" stroke="#cfcfcf" stroke-width="1.2"/><ellipse cx="3" cy="5.0" rx="2.2" ry="4.0" fill="none" stroke="#dddddd" stroke-width="0.9"/></g><g transform="translate(4.5,5.5)"><rect x="0.6" y="0.6" width="9.8" height="8.8" rx="3.2" fill="#b5b5b5" stroke="#b0b0b0" stroke-width="1.2"/><ellipse cx="3" cy="5.0" rx="2.2" ry="4.0" fill="none" stroke="#c8c8c8" stroke-width="0.9"/></g></svg>
<svg style="position:absolute;left:1280px;top:158px;" width="16" height="13" viewBox="0 0 16 13"><rect x="0.6" y="0.6" width="14.8" height="11.8" rx="3.2" fill="#3b5478" stroke="#34507a" stroke-width="1.2"/><ellipse cx="3" cy="6.5" rx="2.2" ry="5.5" fill="none" stroke="#9fb0c4" stroke-width="0.9"/><path d="M3 6.5H15" stroke="#c0ccd8" stroke-width="0.9"/></svg>
<svg style="position:absolute;left:1304px;top:158px;" width="16" height="13" viewBox="0 0 16 13"><rect x="0.6" y="0.6" width="14.8" height="11.8" rx="3.2" fill="#dfe3e8" stroke="#4a6488" stroke-width="1.2"/><path d="M1.2 6.5H14.8V9.5Q14.8 11.8 12.5 11.8H3.5Q1.2 11.8 1.2 9.5Z" fill="#3b5478"/><ellipse cx="3" cy="6.5" rx="2.2" ry="5.5" fill="none" stroke="#9fb0c4" stroke-width="0.9"/></svg>
<svg style="position:absolute;left:1328px;top:158px;" width="16" height="13" viewBox="0 0 16 13"><rect x="0.6" y="0.6" width="14.8" height="11.8" rx="3.2" fill="#e4e4e4" stroke="#4a6488" stroke-width="1.2"/><ellipse cx="3" cy="6.5" rx="2.2" ry="5.5" fill="none" stroke="#8fa0b4" stroke-width="0.9"/><path d="M3 6.5H15" stroke="#4a6488" stroke-width="0.9"/></svg>
<div style="position:absolute;left:1351px;top:156px;width:18px;height:18px;background:#c9e0f7;border:1px solid #3a6ab0;border-radius:2px;box-sizing:border-box;"></div>
<svg style="position:absolute;left:1353px;top:159px;" width="14" height="12" viewBox="0 0 14 12"><rect x="0.6" y="0.6" width="12.8" height="10.8" rx="3.2" fill="#e4e4e4" stroke="#4a6488" stroke-width="1.2"/><ellipse cx="3" cy="6.0" rx="2.2" ry="5.0" fill="none" stroke="#8fa0b4" stroke-width="0.9"/><path d="M3 6.0H13" stroke="#4a6488" stroke-width="0.9"/><g fill="#34507a"><rect x="0" y="0" width="2" height="2"/><rect x="12" y="0" width="2" height="2"/><rect x="0" y="10" width="2" height="2"/><rect x="12" y="10" width="2" height="2"/></g></svg>
<svg style="position:absolute;left:1376px;top:157px;top:158px" width="17" height="16" viewBox="0 0 17 16"><rect x="0.6" y="0.6" width="11.8" height="9.8" rx="3.2" fill="#e6e6e6" stroke="#9aaabb" stroke-width="1.2"/><ellipse cx="3" cy="5.5" rx="2.2" ry="4.5" fill="none" stroke="#b0bcc8" stroke-width="0.9"/><path d="M0.5 0.5L15.5 14.5" stroke="#34507a" stroke-width="1.3"/></svg>
<svg style="position:absolute;left:1416px;top:156px;" width="17" height="17" viewBox="0 0 17 17"><g transform="translate(0,4)"><rect x="0.6" y="0.6" width="14.8" height="11.8" rx="3.2" fill="#e4e4e4" stroke="#4a6488" stroke-width="1.2"/><ellipse cx="3" cy="6.5" rx="2.2" ry="5.5" fill="none" stroke="#9fb0c4" stroke-width="0.9"/></g><rect x="5" y="0.5" width="8" height="6" fill="#fff" stroke="#34507a" stroke-dasharray="1.6 1"/><rect x="7" y="2.5" width="4" height="3" fill="#34507a"/></svg>
<svg style="position:absolute;left:1440px;top:156px;" width="17" height="17" viewBox="0 0 17 17"><g transform="translate(0,4)"><rect x="0.6" y="0.6" width="14.8" height="11.8" rx="3.2" fill="#3b5478" stroke="#34507a" stroke-width="1.2"/><ellipse cx="3" cy="6.5" rx="2.2" ry="5.5" fill="none" stroke="#9fb0c4" stroke-width="0.9"/></g><rect x="5" y="0.5" width="8" height="6" fill="#fff" stroke="#34507a" stroke-dasharray="1.6 1"/><rect x="7" y="2.5" width="4" height="2.5" fill="#c8d4e0"/></svg>
<svg style="position:absolute;left:1465px;top:157px;" width="16" height="16" viewBox="0 0 16 16"><rect x="0.6" y="0.6" width="13.5" height="13" fill="none" stroke="#3a7ac0" stroke-width="1.1" stroke-dasharray="2 1.3"/><rect x="3.5" y="3.5" width="7" height="6" fill="#a8c8e8"/><path d="M5.5 5.5L14 10L10.3 10.8L13 14.5L11.5 15.5L9 11.8L7 14.5Z" fill="#3a6ab0"/></svg>
<svg style="position:absolute;left:1489px;top:156px;" width="16" height="17" viewBox="0 0 16 17"><rect x="2.5" y="2.5" width="12.5" height="12.5" fill="#d0e2f4" stroke="#3a7ac0" stroke-width="1.1" stroke-dasharray="2 1.3"/><path d="M5 7L14 15" fill="none" stroke="#a8c8e8" stroke-width="3"/><path d="M1 0.5L7 10" stroke="#6a4a2a" stroke-width="1.2"/><path d="M5 9L9.5 8L10.5 16.5Z" fill="#d8b080" stroke="#b08050" stroke-width="0.6"/></svg>
<svg style="position:absolute;left:1528px;top:160px;" width="16" height="11" viewBox="0 0 16 11"><ellipse cx="8" cy="5.5" rx="7" ry="4" fill="none" stroke="#aaa" stroke-width="1.2"/><path d="M2 0L14 11" stroke="#888" stroke-width="1.2"/></svg>
<div style="position:absolute;left:1551px;top:156px;width:18px;height:18px;background:#c9e0f7;border:1px solid #3a6ab0;border-radius:2px;box-sizing:border-box;"></div>
<svg style="position:absolute;left:1553px;top:158px;" width="14" height="14" viewBox="0 0 14 14"><rect x="0.5" y="0.5" width="13" height="13" fill="#fff" stroke="#2a4a70"/><rect x="0.5" y="0.5" width="13" height="2.5" fill="#2a4a70"/><ellipse cx="7" cy="8" rx="4.5" ry="2.5" fill="#2a4a70"/><circle cx="7" cy="8" r="1" fill="#fff"/></svg>
<svg style="position:absolute;left:1576px;top:157px;" width="16" height="16" viewBox="0 0 16 16"><rect x="0.5" y="0.5" width="15" height="14" fill="#fff" stroke="#2a4a70"/><rect x="0.5" y="0.5" width="15" height="2" fill="#2a4a70"/><ellipse cx="8" cy="9" rx="4.5" ry="2.5" fill="none" stroke="#aaa"/><path d="M4 5L12 13" stroke="#888"/></svg>
<svg style="position:absolute;left:1600px;top:157px;" width="16" height="16" viewBox="0 0 16 16"><rect x="0.5" y="0.5" width="15" height="14" fill="#fff" stroke="#2a4a70"/><rect x="0.5" y="0.5" width="15" height="2" fill="#2a4a70"/><ellipse cx="8" cy="6.5" rx="3.5" ry="2" fill="#2a4a70"/><ellipse cx="8" cy="11" rx="3.5" ry="2" fill="none" stroke="#aaa"/></svg>
<svg style="position:absolute;left:1625px;top:158px;" width="13" height="13" viewBox="0 0 13 13"><path d="M3 3A5 5 0 1 1 2 8" fill="none" stroke="#2a4a70" stroke-width="1.3"/><path d="M0 1L5 2L1 6Z" fill="#2a4a70"/></svg>
<div style="position:absolute;left:1663px;top:156px;width:19px;height:18px;background:#a9cdf2;border:1px solid #3a6ab0;border-radius:2px;box-sizing:border-box;"></div>
<svg style="position:absolute;left:1666px;top:159px;" width="13" height="12" viewBox="0 0 13 12"><path d="M1 4H5L11 0V12L5 8H1Z" fill="#3a6ab0"/><ellipse cx="9" cy="6" rx="2" ry="3" fill="#c9e0f7"/></svg>
<svg style="position:absolute;left:1689px;top:158px;" width="15" height="13" viewBox="0 0 15 13"><rect x="3.5" y="0.5" width="11" height="9" fill="none" stroke="#6a8ab0"/><rect x="0.5" y="3.5" width="11" height="9" fill="#eef3f8" stroke="#6a8ab0"/></svg>
<div style="position:absolute;left:1711px;top:156px;width:19px;height:18px;background:#c9e0f7;border:1px solid #3a6ab0;border-radius:2px;box-sizing:border-box;"></div>
<svg style="position:absolute;left:1713px;top:158px;" width="15" height="14" viewBox="0 0 15 14"><rect x="0.5" y="0.5" width="14" height="13" fill="none" stroke="#2a4a70" stroke-width="1.1"/><rect x="3.5" y="3.5" width="8" height="7" fill="none" stroke="#2a4a70"/><path d="M0.5 0.5L3.5 3.5M14.5 0.5L11.5 3.5M0.5 13.5L3.5 10.5M14.5 13.5L11.5 10.5" stroke="#2a4a70"/></svg>
<svg style="position:absolute;left:1752px;top:158px;" width="17" height="14" viewBox="0 0 17 14"><rect x="0.5" y="2.5" width="16" height="11" rx="2" fill="#3a6ab0"/><rect x="5" y="0.5" width="6" height="3" fill="#3a6ab0"/><circle cx="8.5" cy="8" r="3.2" fill="#fff"/><circle cx="8.5" cy="8" r="2" fill="#3a6ab0"/></svg>
<svg style="position:absolute;left:1776px;top:157px;" width="16" height="16" viewBox="0 0 16 16"><rect x="3.5" y="0.5" width="9" height="5" fill="#fff" stroke="#3a6ab0"/><rect x="0.5" y="5" width="15" height="8" rx="1.5" fill="#3a6ab0"/><rect x="3.5" y="11" width="9" height="4.5" fill="#fff" stroke="#3a6ab0"/><rect x="11" y="7" width="2" height="1.5" fill="#fff"/></svg>
<div style="position:absolute;left:983px;top:178px;width:933px;height:409px;background:linear-gradient(#7ec5e9 0%,#a2d3ee 45%,#cde8f5 100%);"></div>
<svg style="position:absolute;left:983px;top:178px;overflow:hidden;" width="933" height="409" viewBox="0 0 933 409"><line x1="85.20" y1="0" x2="88.30" y2="409" stroke="#5a6670" stroke-width="1.1"/><line x1="131.40" y1="0" x2="135.00" y2="409" stroke="#111" stroke-width="1.1"/><line x1="183.20" y1="0" x2="186.90" y2="409" stroke="#7a8088" stroke-width="1.1"/><line x1="244.50" y1="0" x2="248.20" y2="409" stroke="#111" stroke-width="1.1"/><line x1="291.20" y1="0" x2="294.40" y2="409" stroke="#3a4650" stroke-width="1.1"/><line x1="396.10" y1="0" x2="399.80" y2="409" stroke="#8a9098" stroke-width="1.1"/><line x1="403.90" y1="0" x2="408.00" y2="409" stroke="#2a3038" stroke-width="1.1"/><line x1="450.60" y1="0" x2="454.30" y2="409" stroke="#111" stroke-width="1.1"/><line x1="509.00" y1="0" x2="512.50" y2="409" stroke="#8a9098" stroke-width="1.1"/><line x1="517.00" y1="0" x2="520.75" y2="409" stroke="#111" stroke-width="1.1"/><line x1="563.75" y1="0" x2="567.00" y2="409" stroke="#3a4650" stroke-width="1.1"/><line x1="630.25" y1="0" x2="634.00" y2="409" stroke="#111" stroke-width="1.1"/><line x1="659.50" y1="0" x2="663.50" y2="409" stroke="#7a8088" stroke-width="1.1"/><line x1="676.50" y1="0" x2="680.25" y2="409" stroke="#111" stroke-width="1.1"/><line x1="790.00" y1="0" x2="793.75" y2="409" stroke="#2a3038" stroke-width="1.1"/><line x1="810.25" y1="0" x2="814.00" y2="409" stroke="#8a9098" stroke-width="1.1"/><line x1="0" y1="156" x2="424" y2="234" stroke="#707880" stroke-width="1"/><line x1="492" y1="231" x2="829" y2="96" stroke="#707880" stroke-width="1"/></svg>
<svg style="position:absolute;left:995px;top:503px;" width="70" height="55" viewBox="0 0 70 55"><path d="M29 43V14" stroke="#1a28d8" stroke-width="1.6"/><path d="M25.5 15L29 7L32.5 15Z" fill="#1a28d8"/><path d="M29 43L46 46" stroke="#e02020" stroke-width="1.6"/><path d="M44 42.5L51 46.5L43.5 49.5Z" fill="#e02020"/><path d="M29 43L18 47" stroke="#20c020" stroke-width="1.6"/><path d="M20 43.5L13 48.5L21 50Z" fill="#20c020"/><text x="26" y="8" font-size="10" fill="#222" font-family="Liberation Sans">z</text><text x="56" y="50" font-size="11" fill="#222" font-family="Liberation Sans">x</text><text x="6" y="53" font-size="11" fill="#222" font-family="Liberation Sans">y</text></svg>
<svg style="position:absolute;left:1890px;top:183px;" width="22" height="19" viewBox="0 0 22 19"><path d="M3 3L18 1L21 16L5 18Z" fill="#f4f6f8" stroke="#cfd6de"/><rect x="7" y="5" width="11" height="9" fill="#1a3a8a"/><path d="M9 7H16V12H9Z" fill="#2a6ae0"/><path d="M11 8L15 10L11 12Z" fill="#f0e040"/></svg>
<div style="position:absolute;left:982px;top:593px;width:935px;height:516px;border:1px solid #9fd0f6;box-sizing:border-box;background:#f8f9fd;"></div>
<div style="position:absolute;left:983px;top:622px;width:933px;height:1px;background:#cbcbcb;"></div>
<div style="position:absolute;left:987px;top:599px;width:61px;height:23px;background:#e9e9ea;"></div>
<div class="t" style="left:991px;top:605.00px;font-size:13.0px;color:#111;">Progress</div>
<div style="position:absolute;left:1055px;top:599px;width:123px;height:23px;background:#e9e9ea;"></div>
<div class="t" style="left:1059px;top:606.00px;font-size:12.5px;color:#111;">External Process</div>
<div style="position:absolute;left:1166px;top:599px;width:159px;height:24px;background:#f8f9fd;border:1px solid #c9c9c9;border-bottom:none;box-sizing:border-box;"></div>
<div class="t" style="left:1171px;top:606.00px;font-size:13.15px;color:#3b9de6;">Accumulated Probe Table</div>
<div style="position:absolute;left:1332px;top:599px;width:69px;height:23px;background:#e9e9ea;"></div>
<div class="t" style="left:1337px;top:605.00px;font-size:13.0px;color:#111;">Messages</div>
<div style="position:absolute;left:1408px;top:599px;width:30px;height:23px;background:#e9e9ea;"></div>
<div class="t" style="left:1411px;top:605.00px;font-size:13.0px;color:#111;">Log</div>
<svg style="position:absolute;left:1874px;top:607px;" width="9" height="6" viewBox="0 0 9 6"><path d="M0 0H9L4.5 5Z" fill="#444"/></svg>
<svg style="position:absolute;left:1888px;top:605px;" width="10" height="13" viewBox="0 0 10 13"><path d="M2 0H7V6L9 8H6V12H4V8H0L2 6Z" fill="#444"/></svg>
<svg style="position:absolute;left:1902px;top:606px;" width="11" height="11" viewBox="0 0 11 11"><path d="M1 1L10 10M10 1L1 10" stroke="#333" stroke-width="1.3"/></svg>
<svg style="position:absolute;left:992px;top:630px;" width="18" height="17" viewBox="0 0 18 17"><rect x="0.6" y="0.6" width="15.6" height="15.2" rx="1.5" fill="#dfe4ea" stroke="#3a7ac0" stroke-width="1.2"/><g fill="#3a7ac0"><rect x="3" y="3" width="1.8" height="1.8"/><rect x="7.5" y="3" width="1.8" height="1.8"/></g><rect x="12" y="3" width="1.8" height="1.8" fill="#e02030"/><g fill="#3a7ac0"><circle cx="4" cy="9.5" r="1.6"/><circle cx="8.5" cy="9.5" r="1.6"/><circle cx="12.8" cy="10" r="1.6"/><rect x="3.3" y="10" width="1.4" height="4.5"/><rect x="7.8" y="10" width="1.4" height="4.5"/><rect x="12.1" y="6.5" width="1.4" height="8"/></g></svg>
<svg style="position:absolute;left:1016px;top:630px;" width="18" height="16" viewBox="0 0 18 16"><text x="0.5" y="6.8" font-size="7.6" font-weight="bold" fill="#b0266c" font-family="Liberation Sans" letter-spacing="-0.2">8.85</text><text x="0.5" y="13.2" font-size="7.6" font-weight="bold" fill="#b0266c" font-family="Liberation Sans" letter-spacing="-0.2">e-12</text></svg>
<svg style="position:absolute;left:1043px;top:630px;" width="14" height="17" viewBox="0 0 14 17"><path d="M1.2 0.8L5.5 9" stroke="#3a3a3a" stroke-width="1.3"/><path d="M4 8.5L7 7.5L11.5 14.5L9 15.5Z" fill="#d8b080" stroke="#a07848" stroke-width="0.6"/><path d="M6 9.5L9.5 15M7.5 9L10.5 14.5" stroke="#b08858" stroke-width="0.5"/></svg>
<svg style="position:absolute;left:1067px;top:630px;" width="13" height="17" viewBox="0 0 13 17"><rect x="3.5" y="0.4" width="5" height="1.4" fill="#3a7ac0"/><rect x="0.3" y="1.8" width="11.6" height="1.6" rx="0.6" fill="#3a7ac0"/><path d="M1.6 4.2H10.6L10 15.8H2.2Z" fill="#fff" stroke="#3a7ac0" stroke-width="1.1"/><path d="M4.3 5.5V14.5M6.1 5.5V14.5M7.9 5.5V14.5" stroke="#3a7ac0" stroke-width="0.9"/></svg>
<svg style="position:absolute;left:1089px;top:630px;" width="17" height="18" viewBox="0 0 17 18"><path d="M1.5 1.5V15.5H16" stroke="#666" stroke-width="0.9" fill="none"/><path d="M0.3 2.6L1.5 0.6L2.7 2.6M14.8 14.3L16.6 15.5L14.8 16.7" stroke="#666" stroke-width="0.8" fill="none"/><rect x="3.3" y="3.3" width="10.7" height="9.4" fill="#fff" stroke="#b0266c" stroke-width="1.1"/><g fill="#b0266c"><rect x="4" y="4" width="4" height="2.2" opacity="0.6"/><rect x="9.3" y="4" width="4" height="2.2" opacity="0.6"/></g><path d="M3.3 6.5H14M3.3 9.5H14M8.6 3.3V12.7" stroke="#b0266c" stroke-width="1"/></svg>
<div style="position:absolute;left:1114px;top:630px;width:15px;height:15px;background:#b0226a;"></div>
<svg style="position:absolute;left:1137px;top:630px;" width="18" height="17" viewBox="0 0 18 17"><rect x="0.6" y="0.6" width="10" height="11" fill="#fff" stroke="#6a6a6a" stroke-width="1.1"/><path d="M2.5 3H7M2.5 5H8" stroke="#888" stroke-width="0.8"/><rect x="5.6" y="4.6" width="10.3" height="11" fill="#fff" stroke="#3a7ac0" stroke-width="1.1"/><path d="M8 7.2H12.5M7.5 10H14M7.5 12.8H14M10.7 10V15" stroke="#3a7ac0" stroke-width="1"/></svg>
<svg style="position:absolute;left:1161px;top:631px;" width="18" height="14" viewBox="0 0 18 14"><path d="M13.5 5V0.6H0.6V11.4H13.5V10" fill="none" stroke="#6a6a6a" stroke-width="1.1"/><path d="M0.6 2.4H13.5" stroke="#6a6a6a" stroke-width="0.9"/><path d="M5.5 7.6H14" stroke="#3a7ac0" stroke-width="1.7"/><path d="M13.3 4.5L16.8 7.6L13.3 10.7Z" fill="#3a7ac0"/></svg>
<svg style="position:absolute;left:1186px;top:631px;" width="15" height="15" viewBox="0 0 15 15"><rect x="0.6" y="0.6" width="12.8" height="12.8" fill="#fff" stroke="#b0266c" stroke-width="1.2"/><g fill="#e8b0c8"><rect x="1" y="1" width="4" height="2.8"/><rect x="9" y="4.2" width="4" height="2.8"/><rect x="5" y="7.4" width="4" height="2.8"/></g><path d="M0.6 3.8H13.4M0.6 7H13.4M0.6 10.2H13.4M4.8 0.6V13.4M9 0.6V13.4" stroke="#b0266c" stroke-width="1"/></svg>
<svg style="position:absolute;left:1209px;top:636px;" width="8" height="5" viewBox="0 0 8 5"><path d="M0 0H8L4 5Z" fill="#222"/></svg>
<div style="position:absolute;left:992px;top:654px;width:915px;height:447px;background:#fff;border:1px solid #c5c5c5;box-sizing:border-box;"></div>
<div style="position:absolute;left:993px;top:655px;width:896px;height:23px;background:linear-gradient(#ffffff 0%,#f7f7f7 40%,#eeeeee 100%);"></div>
<div style="position:absolute;left:993px;top:677px;width:896px;height:1px;background:#c8c8c8;"></div>
<div style="position:absolute;left:993px;top:655px;width:896px;height:427px;overflow:hidden;">
<div class="t" style="left:4px;top:7px;font-size:11.4px;color:#111;">HH</div>
<div style="position:absolute;left:52px;top:0;width:1px;height:22px;background:#dcdcdc;"></div>
<div class="t" style="left:59px;top:7px;font-size:11.4px;color:#111;">del</div>
<div style="position:absolute;left:94px;top:0;width:1px;height:22px;background:#dcdcdc;"></div>
<div class="t" style="left:100px;top:7px;font-size:11.4px;color:#111;">freq</div>
<div style="position:absolute;left:148px;top:0;width:1px;height:22px;background:#dcdcdc;"></div>
<div class="t" style="left:154px;top:7px;font-size:11.4px;color:#111;">arg(ewfd2.</div>
<div style="position:absolute;left:213px;top:0;width:1px;height:22px;background:#dcdcdc;"></div>
<div class="t" style="left:217px;top:7px;font-size:11.4px;color:#111;">rad), Point:</div>
<div style="position:absolute;left:282px;top:0;width:1px;height:22px;background:#dcdcdc;"></div>
<div class="t" style="left:287px;top:7px;font-size:11.4px;color:#111;">1.5365E-1</div>
<div style="position:absolute;left:340px;top:0;width:1px;height:22px;background:#dcdcdc;"></div>
<div class="t" style="left:345px;top:7px;font-size:11.4px;color:#111;">.Efarx) (V/m), Point: (1.5365E-17, 1.5365E-17, 16)arg(ewfd2.Efarx)*180/pi (rad), Point: (0, 0, -10)abs(ewfd2.E</div>
<div style="position:absolute;left:0;top:23px;width:896px;height:17px;background:#ffffff;"></div>
<div style="position:absolute;left:0;top:40px;width:896px;height:1px;background:#c0c0c0;"></div>
<div class="t" style="left:0px;top:27px;font-size:10.9px;color:#111;">7.0000E-7</div>
<div class="t" style="left:53px;top:27px;font-size:10.9px;color:#111;">0.43633</div>
<div class="t" style="left:95px;top:27px;font-size:10.9px;color:#111;">3.7474E13</div>
<div class="t" style="left:149px;top:27px;font-size:10.9px;color:#111;">155.84</div>
<div class="t" style="left:214px;top:27px;font-size:10.9px;color:#111;">4.0098E-4</div>
<div class="t" style="left:283px;top:27px;font-size:10.9px;color:#111;">-150.66</div>
<div class="t" style="left:341px;top:27px;font-size:10.9px;color:#111;">0.0027927</div>
<div style="position:absolute;left:0;top:41px;width:896px;height:17px;background:#f7f8fc;"></div>
<div style="position:absolute;left:0;top:58px;width:896px;height:1px;background:#c0c0c0;"></div>
<div class="t" style="left:0px;top:45px;font-size:10.9px;color:#111;">7.0000E-7</div>
<div class="t" style="left:53px;top:45px;font-size:10.9px;color:#111;">0.45379</div>
<div class="t" style="left:95px;top:45px;font-size:10.9px;color:#111;">3.7474E13</div>
<div class="t" style="left:149px;top:45px;font-size:10.9px;color:#111;">166.81</div>
<div class="t" style="left:214px;top:45px;font-size:10.9px;color:#111;">3.5592E-4</div>
<div class="t" style="left:283px;top:45px;font-size:10.9px;color:#111;">-142.85</div>
<div class="t" style="left:341px;top:45px;font-size:10.9px;color:#111;">0.0024417</div>
<div style="position:absolute;left:0;top:59px;width:896px;height:17px;background:#ffffff;"></div>
<div style="position:absolute;left:0;top:76px;width:896px;height:1px;background:#c0c0c0;"></div>
<div class="t" style="left:0px;top:63px;font-size:10.9px;color:#111;">7.0000E-7</div>
<div class="t" style="left:53px;top:63px;font-size:10.9px;color:#111;">0.47124</div>
<div class="t" style="left:95px;top:63px;font-size:10.9px;color:#111;">3.7474E13</div>
<div class="t" style="left:149px;top:63px;font-size:10.9px;color:#111;">153.58</div>
<div class="t" style="left:214px;top:63px;font-size:10.9px;color:#111;">3.3536E-4</div>
<div class="t" style="left:283px;top:63px;font-size:10.9px;color:#111;">-148.47</div>
<div class="t" style="left:341px;top:63px;font-size:10.9px;color:#111;">0.0027194</div>
<div style="position:absolute;left:0;top:77px;width:896px;height:17px;background:#ededed;"></div>
<div style="position:absolute;left:0;top:94px;width:896px;height:1px;background:#c0c0c0;"></div>
<div class="t" style="left:0px;top:81px;font-size:10.9px;color:#111;">7.0000E-7</div>
<div class="t" style="left:53px;top:81px;font-size:10.9px;color:#111;">0.48869</div>
<div class="t" style="left:95px;top:81px;font-size:10.9px;color:#111;">3.7474E13</div>
<div class="t" style="left:149px;top:81px;font-size:10.9px;color:#111;">158.65</div>
<div class="t" style="left:214px;top:81px;font-size:10.9px;color:#111;">3.1713E-4</div>
<div class="t" style="left:283px;top:81px;font-size:10.9px;color:#111;">-150.21</div>
<div class="t" style="left:341px;top:81px;font-size:10.9px;color:#111;">0.0026087</div>
<div style="position:absolute;left:0;top:95px;width:896px;height:17px;background:#ffffff;"></div>
<div style="position:absolute;left:0;top:112px;width:896px;height:1px;background:#c0c0c0;"></div>
<div class="t" style="left:0px;top:99px;font-size:10.9px;color:#111;">7.0000E-7</div>
<div class="t" style="left:53px;top:99px;font-size:10.9px;color:#111;">0.50615</div>
<div class="t" style="left:95px;top:99px;font-size:10.9px;color:#111;">3.7474E13</div>
<div class="t" style="left:149px;top:99px;font-size:10.9px;color:#111;">151.83</div>
<div class="t" style="left:214px;top:99px;font-size:10.9px;color:#111;">3.3558E-4</div>
<div class="t" style="left:283px;top:99px;font-size:10.9px;color:#111;">-148.05</div>
<div class="t" style="left:341px;top:99px;font-size:10.9px;color:#111;">0.0024791</div>
<div style="position:absolute;left:0;top:113px;width:896px;height:17px;background:#f7f8fc;"></div>
<div style="position:absolute;left:0;top:130px;width:896px;height:1px;background:#c0c0c0;"></div>
<div class="t" style="left:0px;top:117px;font-size:10.9px;color:#111;">7.0000E-7</div>
<div class="t" style="left:53px;top:117px;font-size:10.9px;color:#111;">0.52360</div>
<div class="t" style="left:95px;top:117px;font-size:10.9px;color:#111;">3.7474E13</div>
<div class="t" style="left:149px;top:117px;font-size:10.9px;color:#111;">134.21</div>
<div class="t" style="left:214px;top:117px;font-size:10.9px;color:#111;">3.0378E-4</div>
<div class="t" style="left:283px;top:117px;font-size:10.9px;color:#111;">-149.21</div>
<div class="t" style="left:341px;top:117px;font-size:10.9px;color:#111;">0.0023494</div>
<div style="position:absolute;left:0;top:131px;width:896px;height:17px;background:#ffffff;"></div>
<div style="position:absolute;left:0;top:148px;width:896px;height:1px;background:#c0c0c0;"></div>
<div class="t" style="left:0px;top:135px;font-size:10.9px;color:#111;">7.0000E-7</div>
<div class="t" style="left:53px;top:135px;font-size:10.9px;color:#111;">0.54105</div>
<div class="t" style="left:95px;top:135px;font-size:10.9px;color:#111;">3.7474E13</div>
<div class="t" style="left:149px;top:135px;font-size:10.9px;color:#111;">172.06</div>
<div class="t" style="left:214px;top:135px;font-size:10.9px;color:#111;">3.8734E-4</div>
<div class="t" style="left:283px;top:135px;font-size:10.9px;color:#111;">-147.53</div>
<div class="t" style="left:341px;top:135px;font-size:10.9px;color:#111;">0.0023073</div>
<div style="position:absolute;left:0;top:149px;width:896px;height:17px;background:#f7f8fc;"></div>
<div style="position:absolute;left:0;top:166px;width:896px;height:1px;background:#c0c0c0;"></div>
<div class="t" style="left:0px;top:153px;font-size:10.9px;color:#111;">7.0000E-7</div>
<div class="t" style="left:53px;top:153px;font-size:10.9px;color:#111;">0.55851</div>
<div class="t" style="left:95px;top:153px;font-size:10.9px;color:#111;">3.7474E13</div>
<div class="t" style="left:149px;top:153px;font-size:10.9px;color:#111;">163.44</div>
<div class="t" style="left:214px;top:153px;font-size:10.9px;color:#111;">2.7143E-4</div>
<div class="t" style="left:283px;top:153px;font-size:10.9px;color:#111;">-148.41</div>
<div class="t" style="left:341px;top:153px;font-size:10.9px;color:#111;">0.0019428</div>
<div style="position:absolute;left:0;top:167px;width:896px;height:17px;background:#ffffff;"></div>
<div style="position:absolute;left:0;top:184px;width:896px;height:1px;background:#c0c0c0;"></div>
<div class="t" style="left:0px;top:171px;font-size:10.9px;color:#111;">7.0000E-7</div>
<div class="t" style="left:53px;top:171px;font-size:10.9px;color:#111;">0.57596</div>
<div class="t" style="left:95px;top:171px;font-size:10.9px;color:#111;">3.7474E13</div>
<div class="t" style="left:149px;top:171px;font-size:10.9px;color:#111;">166.44</div>
<div class="t" style="left:214px;top:171px;font-size:10.9px;color:#111;">2.5943E-4</div>
<div class="t" style="left:283px;top:171px;font-size:10.9px;color:#111;">-151.23</div>
<div class="t" style="left:341px;top:171px;font-size:10.9px;color:#111;">0.0021665</div>
<div style="position:absolute;left:0;top:185px;width:896px;height:17px;background:#f7f8fc;"></div>
<div style="position:absolute;left:0;top:202px;width:896px;height:1px;background:#c0c0c0;"></div>
<div class="t" style="left:0px;top:189px;font-size:10.9px;color:#111;">7.0000E-7</div>
<div class="t" style="left:53px;top:189px;font-size:10.9px;color:#111;">0.59341</div>
<div class="t" style="left:95px;top:189px;font-size:10.9px;color:#111;">3.7474E13</div>
<div class="t" style="left:149px;top:189px;font-size:10.9px;color:#111;">163.94</div>
<div class="t" style="left:214px;top:189px;font-size:10.9px;color:#111;">2.4640E-4</div>
<div class="t" style="left:283px;top:189px;font-size:10.9px;color:#111;">-147.93</div>
<div class="t" style="left:341px;top:189px;font-size:10.9px;color:#111;">0.0018372</div>
<div style="position:absolute;left:0;top:203px;width:896px;height:17px;background:#ffffff;"></div>
<div style="position:absolute;left:0;top:220px;width:896px;height:1px;background:#c0c0c0;"></div>
<div class="t" style="left:0px;top:207px;font-size:10.9px;color:#111;">7.0000E-7</div>
<div class="t" style="left:53px;top:207px;font-size:10.9px;color:#111;">0.61087</div>
<div class="t" style="left:95px;top:207px;font-size:10.9px;color:#111;">3.7474E13</div>
<div class="t" style="left:149px;top:207px;font-size:10.9px;color:#111;">151.46</div>
<div class="t" style="left:214px;top:207px;font-size:10.9px;color:#111;">2.2946E-4</div>
<div class="t" style="left:283px;top:207px;font-size:10.9px;color:#111;">-148.25</div>
<div class="t" style="left:341px;top:207px;font-size:10.9px;color:#111;">0.0021465</div>
<div style="position:absolute;left:0;top:221px;width:896px;height:17px;background:#f7f8fc;"></div>
<div style="position:absolute;left:0;top:238px;width:896px;height:1px;background:#c0c0c0;"></div>
<div class="t" style="left:0px;top:225px;font-size:10.9px;color:#111;">7.0000E-7</div>
<div class="t" style="left:53px;top:225px;font-size:10.9px;color:#111;">0.62832</div>
<div class="t" style="left:95px;top:225px;font-size:10.9px;color:#111;">3.7474E13</div>
<div class="t" style="left:149px;top:225px;font-size:10.9px;color:#111;">169.68</div>
<div class="t" style="left:214px;top:225px;font-size:10.9px;color:#111;">2.2769E-4</div>
<div class="t" style="left:283px;top:225px;font-size:10.9px;color:#111;">-147.77</div>
<div class="t" style="left:341px;top:225px;font-size:10.9px;color:#111;">0.0017056</div>
<div style="position:absolute;left:0;top:239px;width:896px;height:17px;background:#ffffff;"></div>
<div style="position:absolute;left:0;top:256px;width:896px;height:1px;background:#c0c0c0;"></div>
<div class="t" style="left:0px;top:243px;font-size:10.9px;color:#111;">7.0000E-7</div>
<div class="t" style="left:53px;top:243px;font-size:10.9px;color:#111;">0.64577</div>
<div class="t" style="left:95px;top:243px;font-size:10.9px;color:#111;">3.7474E13</div>
<div class="t" style="left:149px;top:243px;font-size:10.9px;color:#111;">163.38</div>
<div class="t" style="left:214px;top:243px;font-size:10.9px;color:#111;">2.0184E-4</div>
<div class="t" style="left:283px;top:243px;font-size:10.9px;color:#111;">-149.88</div>
<div class="t" style="left:341px;top:243px;font-size:10.9px;color:#111;">0.0015581</div>
<div style="position:absolute;left:0;top:257px;width:896px;height:17px;background:#f7f8fc;"></div>
<div style="position:absolute;left:0;top:274px;width:896px;height:1px;background:#c0c0c0;"></div>
<div class="t" style="left:0px;top:261px;font-size:10.9px;color:#111;">7.0000E-7</div>
<div class="t" style="left:53px;top:261px;font-size:10.9px;color:#111;">0.66323</div>
<div class="t" style="left:95px;top:261px;font-size:10.9px;color:#111;">3.7474E13</div>
<div class="t" style="left:149px;top:261px;font-size:10.9px;color:#111;">152.68</div>
<div class="t" style="left:214px;top:261px;font-size:10.9px;color:#111;">1.7561E-4</div>
<div class="t" style="left:283px;top:261px;font-size:10.9px;color:#111;">-152.52</div>
<div class="t" style="left:341px;top:261px;font-size:10.9px;color:#111;">0.0014460</div>
<div style="position:absolute;left:0;top:275px;width:896px;height:17px;background:#ffffff;"></div>
<div style="position:absolute;left:0;top:292px;width:896px;height:1px;background:#c0c0c0;"></div>
<div class="t" style="left:0px;top:279px;font-size:10.9px;color:#111;">7.0000E-7</div>
<div class="t" style="left:53px;top:279px;font-size:10.9px;color:#111;">0.68068</div>
<div class="t" style="left:95px;top:279px;font-size:10.9px;color:#111;">3.7474E13</div>
<div class="t" style="left:149px;top:279px;font-size:10.9px;color:#111;">-171.68</div>
<div class="t" style="left:214px;top:279px;font-size:10.9px;color:#111;">1.4024E-4</div>
<div class="t" style="left:283px;top:279px;font-size:10.9px;color:#111;">-147.45</div>
<div class="t" style="left:341px;top:279px;font-size:10.9px;color:#111;">0.0012382</div>
<div style="position:absolute;left:0;top:293px;width:896px;height:17px;background:#f7f8fc;"></div>
<div style="position:absolute;left:0;top:310px;width:896px;height:1px;background:#c0c0c0;"></div>
<div class="t" style="left:0px;top:297px;font-size:10.9px;color:#111;">7.0000E-7</div>
<div class="t" style="left:53px;top:297px;font-size:10.9px;color:#111;">0.69813</div>
<div class="t" style="left:95px;top:297px;font-size:10.9px;color:#111;">3.7474E13</div>
<div class="t" style="left:149px;top:297px;font-size:10.9px;color:#111;">160.46</div>
<div class="t" style="left:214px;top:297px;font-size:10.9px;color:#111;">1.8282E-4</div>
<div class="t" style="left:283px;top:297px;font-size:10.9px;color:#111;">-149.28</div>
<div class="t" style="left:341px;top:297px;font-size:10.9px;color:#111;">0.0013323</div>
<div style="position:absolute;left:0;top:311px;width:896px;height:17px;background:#ffffff;"></div>
<div style="position:absolute;left:0;top:328px;width:896px;height:1px;background:#c0c0c0;"></div>
<div class="t" style="left:0px;top:315px;font-size:10.9px;color:#111;">7.0000E-7</div>
<div class="t" style="left:53px;top:315px;font-size:10.9px;color:#111;">0.71558</div>
<div class="t" style="left:95px;top:315px;font-size:10.9px;color:#111;">3.7474E13</div>
<div class="t" style="left:149px;top:315px;font-size:10.9px;color:#111;">171.77</div>
<div class="t" style="left:214px;top:315px;font-size:10.9px;color:#111;">5.4940E-5</div>
<div class="t" style="left:283px;top:315px;font-size:10.9px;color:#111;">-145.21</div>
<div class="t" style="left:341px;top:315px;font-size:10.9px;color:#111;">5.4246E-4</div>
<div style="position:absolute;left:0;top:329px;width:896px;height:17px;background:#f7f8fc;"></div>
<div style="position:absolute;left:0;top:346px;width:896px;height:1px;background:#c0c0c0;"></div>
<div class="t" style="left:0px;top:333px;font-size:10.9px;color:#111;">7.0000E-7</div>
<div class="t" style="left:53px;top:333px;font-size:10.9px;color:#111;">0.73304</div>
<div class="t" style="left:95px;top:333px;font-size:10.9px;color:#111;">3.7474E13</div>
<div class="t" style="left:149px;top:333px;font-size:10.9px;color:#111;">-135.12</div>
<div class="t" style="left:214px;top:333px;font-size:10.9px;color:#111;">7.9178E-5</div>
<div class="t" style="left:283px;top:333px;font-size:10.9px;color:#111;">-131.77</div>
<div class="t" style="left:341px;top:333px;font-size:10.9px;color:#111;">5.3120E-4</div>
<div style="position:absolute;left:0;top:347px;width:896px;height:17px;background:#ffffff;"></div>
<div style="position:absolute;left:0;top:364px;width:896px;height:1px;background:#c0c0c0;"></div>
<div class="t" style="left:0px;top:351px;font-size:10.9px;color:#111;">7.0000E-7</div>
<div class="t" style="left:53px;top:351px;font-size:10.9px;color:#111;">0.75049</div>
<div class="t" style="left:95px;top:351px;font-size:10.9px;color:#111;">3.7474E13</div>
<div class="t" style="left:149px;top:351px;font-size:10.9px;color:#111;">154.85</div>
<div class="t" style="left:214px;top:351px;font-size:10.9px;color:#111;">9.9212E-5</div>
<div class="t" style="left:283px;top:351px;font-size:10.9px;color:#111;">-140.86</div>
<div class="t" style="left:341px;top:351px;font-size:10.9px;color:#111;">9.0389E-4</div>
<div style="position:absolute;left:0;top:365px;width:896px;height:17px;background:#f7f8fc;"></div>
<div style="position:absolute;left:0;top:382px;width:896px;height:1px;background:#c0c0c0;"></div>
<div class="t" style="left:0px;top:369px;font-size:10.9px;color:#111;">7.0000E-7</div>
<div class="t" style="left:53px;top:369px;font-size:10.9px;color:#111;">0.76794</div>
<div class="t" style="left:95px;top:369px;font-size:10.9px;color:#111;">3.7474E13</div>
<div class="t" style="left:149px;top:369px;font-size:10.9px;color:#111;">-129.15</div>
<div class="t" style="left:214px;top:369px;font-size:10.9px;color:#111;">2.9866E-5</div>
<div class="t" style="left:283px;top:369px;font-size:10.9px;color:#111;">-123.00</div>
<div class="t" style="left:341px;top:369px;font-size:10.9px;color:#111;">5.9906E-4</div>
<div style="position:absolute;left:0;top:383px;width:896px;height:17px;background:#ffffff;"></div>
<div style="position:absolute;left:0;top:400px;width:896px;height:1px;background:#c0c0c0;"></div>
<div class="t" style="left:0px;top:387px;font-size:10.9px;color:#111;">7.0000E-7</div>
<div class="t" style="left:53px;top:387px;font-size:10.9px;color:#111;">0.78540</div>
<div class="t" style="left:95px;top:387px;font-size:10.9px;color:#111;">3.7474E13</div>
<div class="t" style="left:149px;top:387px;font-size:10.9px;color:#111;">-172.45</div>
<div class="t" style="left:214px;top:387px;font-size:10.9px;color:#111;">8.1560E-5</div>
<div class="t" style="left:283px;top:387px;font-size:10.9px;color:#111;">-124.84</div>
<div class="t" style="left:341px;top:387px;font-size:10.9px;color:#111;">3.6182E-4</div>
<div style="position:absolute;left:0;top:401px;width:896px;height:17px;background:#f7f8fc;"></div>
<div style="position:absolute;left:0;top:418px;width:896px;height:1px;background:#c0c0c0;"></div>
<div class="t" style="left:0px;top:405px;font-size:10.9px;color:#111;">7.0000E-7</div>
<div class="t" style="left:53px;top:405px;font-size:10.9px;color:#111;">0.80285</div>
<div class="t" style="left:95px;top:405px;font-size:10.9px;color:#111;">3.7474E13</div>
<div class="t" style="left:149px;top:405px;font-size:10.9px;color:#111;">-67.038</div>
<div class="t" style="left:214px;top:405px;font-size:10.9px;color:#111;">6.9212E-5</div>
<div class="t" style="left:283px;top:405px;font-size:10.9px;color:#111;">-24.923</div>
<div class="t" style="left:341px;top:405px;font-size:10.9px;color:#111;">2.2305E-4</div>
<div style="position:absolute;left:0;top:419px;width:896px;height:17px;background:#ffffff;"></div>
<div style="position:absolute;left:0;top:436px;width:896px;height:1px;background:#c0c0c0;"></div>
<div class="t" style="left:0px;top:423px;font-size:10.9px;color:#111;">7.0000E-7</div>
<div class="t" style="left:53px;top:423px;font-size:10.9px;color:#111;">0.82030</div>
<div class="t" style="left:95px;top:423px;font-size:10.9px;color:#111;">3.7474E13</div>
<div class="t" style="left:149px;top:423px;font-size:10.9px;color:#111;">-92.308</div>
<div class="t" style="left:214px;top:423px;font-size:10.9px;color:#111;">6.7073E-5</div>
<div class="t" style="left:283px;top:423px;font-size:10.9px;color:#111;">-66.778</div>
<div class="t" style="left:341px;top:423px;font-size:10.9px;color:#111;">2.7243E-4</div>
<div style="position:absolute;left:52px;top:22px;width:1px;height:410px;background:#c0c0c0;"></div>
<div style="position:absolute;left:94px;top:22px;width:1px;height:410px;background:#c0c0c0;"></div>
<div style="position:absolute;left:148px;top:22px;width:1px;height:410px;background:#c0c0c0;"></div>
<div style="position:absolute;left:213px;top:22px;width:1px;height:410px;background:#c0c0c0;"></div>
<div style="position:absolute;left:282px;top:22px;width:1px;height:410px;background:#c0c0c0;"></div>
<div style="position:absolute;left:340px;top:22px;width:1px;height:410px;background:#c0c0c0;"></div>
</div>
<div style="position:absolute;left:1889px;top:677px;width:17px;height:405px;background:#ececec;"></div>
<svg style="position:absolute;left:1894px;top:685px;" width="8" height="5" viewBox="0 0 8 5"><path d="M0 5L4 0L8 5Z" fill="#999"/></svg>
<svg style="position:absolute;left:1894px;top:1071px;" width="8" height="5" viewBox="0 0 8 5"><path d="M0 0H8L4 5Z" fill="#777"/></svg>
<div style="position:absolute;left:1891px;top:694px;width:14px;height:8px;background:linear-gradient(#fafafa,#d8d8d8);border:1px solid #8f8f8f;border-radius:2px;box-sizing:border-box;"></div>
<div style="position:absolute;left:993px;top:1082px;width:896px;height:18px;background:#ececec;"></div>
<div style="position:absolute;left:1889px;top:1082px;width:17px;height:18px;background:#efefef;"></div>
<svg style="position:absolute;left:999px;top:1088px;" width="5" height="8" viewBox="0 0 5 8"><path d="M5 0V8L0 4Z" fill="#9a9a9a"/></svg>
<svg style="position:absolute;left:1876px;top:1088px;" width="5" height="8" viewBox="0 0 5 8"><path d="M0 0V8L5 4Z" fill="#6a6a6a"/></svg>
<div style="position:absolute;left:1010px;top:1083px;width:735px;height:16px;background:linear-gradient(#fafafa 0%,#ececec 45%,#c8c8cc 90%,#d8d8d8 100%);border:1px solid #8f8f8f;border-radius:2px;box-sizing:border-box;"></div>
<svg style="position:absolute;left:1373px;top:1087px;" width="7" height="8" viewBox="0 0 7 8"><g stroke="#222" stroke-width="1.2"><path d="M1 0V7M3.5 0V7M6 0V7"/></g></svg>
</body></html>
